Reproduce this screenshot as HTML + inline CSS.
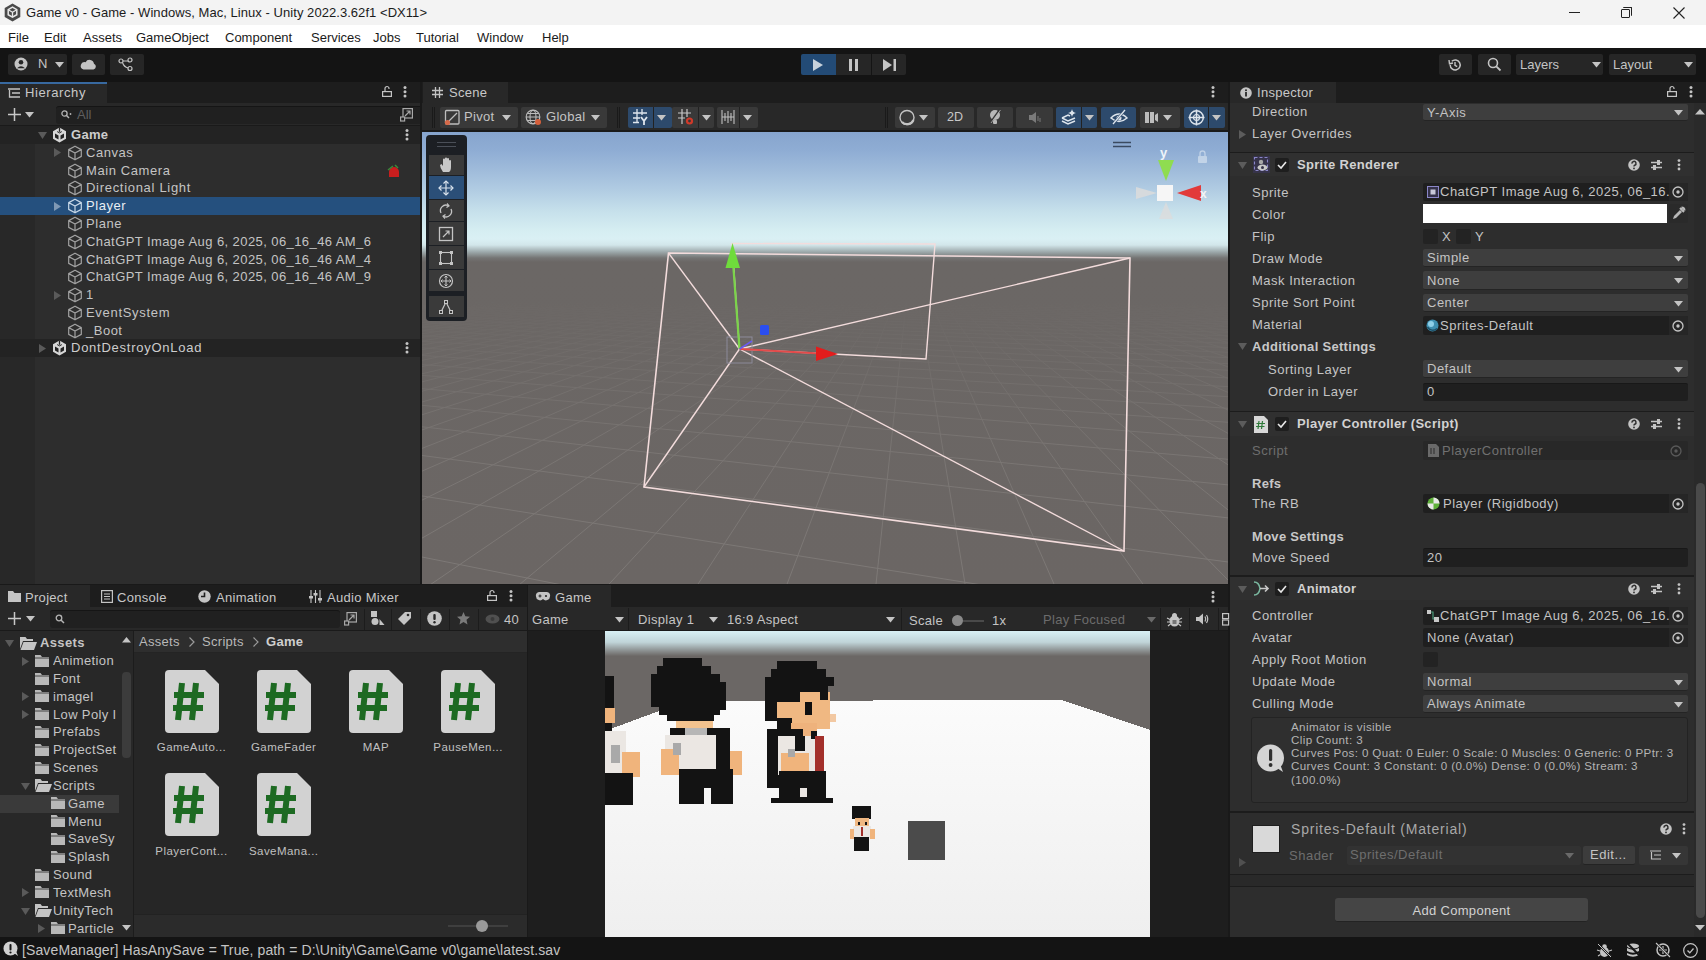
<!DOCTYPE html>
<html><head><meta charset="utf-8">
<style>
*{box-sizing:border-box;margin:0;padding:0}
html,body{width:1706px;height:960px;overflow:hidden;background:#191919;font-family:"Liberation Sans",sans-serif}
.a{position:absolute}
.t{position:absolute;white-space:nowrap;font-size:13px;line-height:18px;height:18px;color:#c4c4c4}
.b{font-weight:bold}
svg{position:absolute;overflow:visible}
</style></head><body>
<!-- TITLE BAR -->
<div class="a" style="left:0;top:0;width:1706px;height:25px;background:#f3f3f3"></div>
<svg style="left:3px;top:3px" width="19" height="19" viewBox="0 0 19 19"><path d="M9.5 0.5 L17.3 5 V14 L9.5 18.5 L1.7 14 V5Z" fill="#4a4a4a"/><path d="M9.5 4.2 L13.8 6.7 V11.7 L9.5 14.2 L5.2 11.7 V6.7Z" fill="none" stroke="#e8e8e8" stroke-width="1.5"/><path d="M9.5 9.2 V14 M9.5 9.2 L5.3 6.8 M9.5 9.2 L13.7 6.8" stroke="#e8e8e8" stroke-width="1.3"/></svg>
<div class="t" style="left:26px;top:4px;color:#1b1b1b;font-size:13px;letter-spacing:0.05px">Game v0 - Game - Windows, Mac, Linux - Unity 2022.3.62f1 &lt;DX11&gt;</div>
<div class="a" style="left:1569px;top:12px;width:11px;height:1px;background:#222"></div>
<div class="a" style="left:1621px;top:9px;width:9px;height:9px;border:1px solid #222;border-radius:1px"></div>
<div class="a" style="left:1623px;top:7px;width:9px;height:9px;border-top:1px solid #222;border-right:1px solid #222;border-radius:1px"></div>
<svg style="left:1673px;top:7px" width="12" height="12"><path d="M0.5 0.5 L11.5 11.5 M11.5 0.5 L0.5 11.5" stroke="#222" stroke-width="1.1"/></svg>
<!-- MENU BAR -->
<div class="a" style="left:0;top:25px;width:1706px;height:23px;background:#ffffff"></div>
<div class="t" style="left:8px;top:29px;color:#1a1a1a">File</div>
<div class="t" style="left:44px;top:29px;color:#1a1a1a">Edit</div>
<div class="t" style="left:83px;top:29px;color:#1a1a1a">Assets</div>
<div class="t" style="left:136px;top:29px;color:#1a1a1a">GameObject</div>
<div class="t" style="left:225px;top:29px;color:#1a1a1a">Component</div>
<div class="t" style="left:311px;top:29px;color:#1a1a1a">Services</div>
<div class="t" style="left:373px;top:29px;color:#1a1a1a">Jobs</div>
<div class="t" style="left:416px;top:29px;color:#1a1a1a">Tutorial</div>
<div class="t" style="left:477px;top:29px;color:#1a1a1a">Window</div>
<div class="t" style="left:542px;top:29px;color:#1a1a1a">Help</div>
<!-- TOOLBAR -->
<div class="a" style="left:0;top:48px;width:1706px;height:34px;background:#141414"></div>
<div class="a" style="left:8px;top:54px;width:59px;height:21px;background:#262626;border-radius:2px"></div>
<svg style="left:14px;top:57px" width="14" height="14" viewBox="0 0 14 14"><circle cx="7" cy="7" r="6.5" fill="#c4c4c4"/><circle cx="7" cy="5.3" r="2.3" fill="#262626"/><path d="M3 11.2 Q7 7.5 11 11.2" fill="#262626"/></svg>
<div class="t" style="left:38px;top:55px;color:#c4c4c4">N</div>
<svg style="left:55px;top:62px" width="9" height="6"><path d="M0 0 H9 L4.5 5.5Z" fill="#c4c4c4"/></svg>
<div class="a" style="left:72px;top:54px;width:33px;height:21px;background:#262626;border-radius:2px"></div>
<svg style="left:80px;top:58px" width="17" height="12" viewBox="0 0 17 12"><path d="M3.5 11.5 H13.5 A3 3 0 0 0 14 5.8 A4.5 4.5 0 0 0 5.6 4.2 A3.6 3.6 0 0 0 3.5 11.5Z" fill="#c4c4c4"/></svg>
<div class="a" style="left:110px;top:54px;width:34px;height:21px;background:#262626;border-radius:2px"></div>
<svg style="left:118px;top:57px" width="17" height="15" viewBox="0 0 17 15"><circle cx="3" cy="4" r="2" fill="none" stroke="#c4c4c4" stroke-width="1.2"/><circle cx="12" cy="3" r="2" fill="none" stroke="#c4c4c4" stroke-width="1.2"/><circle cx="12" cy="11.5" r="2" fill="none" stroke="#c4c4c4" stroke-width="1.2"/><path d="M5 4 H10 M4.5 5.5 Q6 10 10 11" fill="none" stroke="#c4c4c4" stroke-width="1.2"/></svg>
<!-- play controls -->
<div class="a" style="left:801px;top:54px;width:35px;height:21px;background:#234b76;border-radius:2px 0 0 2px"></div>
<svg style="left:813px;top:59px" width="11" height="13"><path d="M0 0 L10 6 L0 12Z" fill="#c8d2dc"/></svg>
<div class="a" style="left:836px;top:54px;width:35px;height:21px;background:#262626"></div>
<div class="a" style="left:849px;top:59px;width:3px;height:12px;background:#c4c4c4"></div>
<div class="a" style="left:855px;top:59px;width:3px;height:12px;background:#c4c4c4"></div>
<div class="a" style="left:872px;top:54px;width:34px;height:21px;background:#262626;border-radius:0 2px 2px 0"></div>
<svg style="left:883px;top:59px" width="14" height="13"><path d="M0 0 L9 6 L0 12Z" fill="#c4c4c4"/><rect x="10.5" y="0" width="2.5" height="12" fill="#c4c4c4"/></svg>
<!-- right toolbar -->
<div class="a" style="left:1439px;top:54px;width:33px;height:21px;background:#262626;border-radius:2px"></div>
<svg style="left:1448px;top:58px" width="14" height="14" viewBox="0 0 14 14"><path d="M2.2 7 A5 5 0 1 0 3.8 3.3" fill="none" stroke="#c4c4c4" stroke-width="1.5"/><path d="M1 2 L1.5 5.8 L5 5" fill="none" stroke="#c4c4c4" stroke-width="1.4"/><path d="M7 4 V7.3 L9.2 8.6" fill="none" stroke="#c4c4c4" stroke-width="1.4"/></svg>
<div class="a" style="left:1478px;top:54px;width:33px;height:21px;background:#262626;border-radius:2px"></div>
<svg style="left:1487px;top:57px" width="15" height="15" viewBox="0 0 15 15"><circle cx="6" cy="6" r="4.5" fill="none" stroke="#c4c4c4" stroke-width="1.6"/><path d="M9.3 9.3 L13.5 13.5" stroke="#c4c4c4" stroke-width="1.8"/></svg>
<div class="a" style="left:1516px;top:54px;width:87px;height:21px;background:#262626;border-radius:2px"></div>
<div class="t" style="left:1520px;top:56px;color:#c4c4c4">Layers</div>
<svg style="left:1592px;top:62px" width="9" height="6"><path d="M0 0 H9 L4.5 5.5Z" fill="#c4c4c4"/></svg>
<div class="a" style="left:1609px;top:54px;width:87px;height:21px;background:#262626;border-radius:2px"></div>
<div class="t" style="left:1613px;top:56px;color:#c4c4c4">Layout</div>
<svg style="left:1684px;top:62px" width="9" height="6"><path d="M0 0 H9 L4.5 5.5Z" fill="#c4c4c4"/></svg>
<div class="a" style="left:0;top:82px;width:420px;height:21px;background:#1d1d1d"></div>
<div class="a" style="left:0;top:82px;width:107px;height:21px;background:#282828"></div>
<div class="a" style="left:0;top:82px;width:107px;height:2px;background:#3869a0"></div>
<svg style="left:8px;top:88px" width="13" height="11" viewBox="0 0 13 11"><path d="M0 1 H12 M4 5 H12 M4 9 H12 M1.5 2 V9 H4" fill="none" stroke="#c4c4c4" stroke-width="1.3"/></svg>
<div class="t" style="left:25px;top:84px;color:#c8c8c8;letter-spacing:0.6px">Hierarchy</div>
<svg style="left:382px;top:86px" width="10" height="11" viewBox="0 0 10 11"><path d="M3 5 V2.5 A2 2 0 0 1 7 2.5 V3" fill="none" stroke="#c4c4c4" stroke-width="1.2"/><rect x="0.6" y="5.6" width="8.8" height="4.8" fill="none" stroke="#c4c4c4" stroke-width="1.2"/></svg>
<svg style="left:403px;top:86px" width="4" height="12" viewBox="0 0 4 12"><circle cx="2" cy="1.6" r="1.5" fill="#c4c4c4"/><circle cx="2" cy="5.8" r="1.5" fill="#c4c4c4"/><circle cx="2" cy="10" r="1.5" fill="#c4c4c4"/></svg>
<div class="a" style="left:0;top:103px;width:420px;height:23px;background:#282828"></div>
<div class="a" style="left:0;top:125px;width:420px;height:1px;background:#1a1a1a"></div>
<svg style="left:8px;top:108px" width="13" height="13"><path d="M6.5 0 V13 M0 6.5 H13" stroke="#c8c8c8" stroke-width="1.5"/></svg>
<svg style="left:25px;top:112px" width="9" height="6"><path d="M0 0 H9 L4.5 5.5Z" fill="#c4c4c4"/></svg>
<div class="a" style="left:56px;top:106px;width:364px;height:18px;background:#202020;border-radius:3px 0 0 3px;border-top:1px solid #151515"></div>
<svg style="left:61px;top:110px" width="11" height="10" viewBox="0 0 11 10"><circle cx="3.5" cy="3.5" r="2.6" fill="none" stroke="#b4b4b4" stroke-width="1.3"/><path d="M5.5 5.5 L8 8" stroke="#b4b4b4" stroke-width="1.4"/><circle cx="9.5" cy="4" r="0.9" fill="#b4b4b4"/></svg>
<div class="t" style="left:77px;top:106px;color:#5f5f5f">All</div>
<svg style="left:400px;top:108px" width="13" height="14" viewBox="0 0 13 14"><rect x="3" y="0.6" width="9.4" height="9.4" fill="none" stroke="#a8a8a8" stroke-width="1.2"/><rect x="0.6" y="9" width="4" height="4" fill="#202020" stroke="#a8a8a8" stroke-width="1.2"/><path d="M5 8 L10 3 M6.5 3 H10 V6.5" fill="none" stroke="#a8a8a8" stroke-width="1.2"/></svg>
<div class="a" style="left:0;top:126px;width:420px;height:458px;background:#2d2d2d"></div>
<div class="a" style="left:0;top:126px;width:35px;height:458px;background:#282828"></div>
<div class="a" style="left:420px;top:82px;width:2px;height:502px;background:#191919"></div>
<div class="a" style="left:0;top:126.30px;width:420px;height:17.76px;background:#232323"></div>
<svg style="left:38px;top:132.18px" width="9" height="7"><path d="M0 0 H9 L4.5 7Z" fill="#5a5a5a"/></svg>
<svg style="left:52px;top:127.18px" width="15" height="16" viewBox="0 0 15 16"><path d="M7.5 0.6 L14 4.3 V11.7 L7.5 15.4 L1 11.7 V4.3Z" fill="#d6d6d6"/><path d="M3 6.4 L6.5 8.4 V12.6 L3 10.6Z M12 6.4 L8.5 8.4 V12.6 L12 10.6Z" fill="#232323"/><path d="M7.5 0.3 V4.8" stroke="#232323" stroke-width="1.3"/><path d="M5.2 4.6 L7.5 5.9 L9.8 4.6" fill="none" stroke="#232323" stroke-width="1"/></svg>
<div class="t b" style="left:71px;top:126.18px;color:#cdcdcd;letter-spacing:0.3px">Game</div>
<svg style="left:405px;top:129.18px" width="4" height="12" viewBox="0 0 4 12"><circle cx="2" cy="1.6" r="1.5" fill="#c4c4c4"/><circle cx="2" cy="5.8" r="1.5" fill="#c4c4c4"/><circle cx="2" cy="10" r="1.5" fill="#c4c4c4"/></svg>
<svg style="left:54px;top:148.44px" width="7" height="9"><path d="M0 0 V9 L7 4.5Z" fill="#5a5a5a"/></svg>
<svg style="left:67px;top:144.94px" width="16" height="16" viewBox="0 0 16 16"><path d="M8 1.2 L14.3 4.6 V11.4 L8 14.8 L1.7 11.4 V4.6Z M1.7 4.6 L8 8 L14.3 4.6 M8 8 V14.8" fill="none" stroke="#a2a2a2" stroke-width="1.2" stroke-linejoin="round"/></svg>
<div class="t" style="left:86px;top:143.94px;color:#c4c4c4;letter-spacing:0.55px">Canvas</div>
<svg style="left:67px;top:162.7px" width="16" height="16" viewBox="0 0 16 16"><path d="M8 1.2 L14.3 4.6 V11.4 L8 14.8 L1.7 11.4 V4.6Z M1.7 4.6 L8 8 L14.3 4.6 M8 8 V14.8" fill="none" stroke="#a2a2a2" stroke-width="1.2" stroke-linejoin="round"/></svg>
<div class="t" style="left:86px;top:161.70px;color:#c4c4c4;letter-spacing:0.6px">Main Camera</div>
<svg style="left:67px;top:180.46px" width="16" height="16" viewBox="0 0 16 16"><path d="M8 1.2 L14.3 4.6 V11.4 L8 14.8 L1.7 11.4 V4.6Z M1.7 4.6 L8 8 L14.3 4.6 M8 8 V14.8" fill="none" stroke="#a2a2a2" stroke-width="1.2" stroke-linejoin="round"/></svg>
<div class="t" style="left:86px;top:179.46px;color:#c4c4c4;letter-spacing:0.7px">Directional Light</div>
<div class="a" style="left:0;top:197.34px;width:420px;height:17.76px;background:#25507e"></div>
<svg style="left:54px;top:201.72px" width="7" height="9"><path d="M0 0 V9 L7 4.5Z" fill="#7f98b4"/></svg>
<svg style="left:67px;top:198.22px" width="16" height="16" viewBox="0 0 16 16"><path d="M8 1.2 L14.3 4.6 V11.4 L8 14.8 L1.7 11.4 V4.6Z M1.7 4.6 L8 8 L14.3 4.6 M8 8 V14.8" fill="none" stroke="#c8d8e8" stroke-width="1.2" stroke-linejoin="round"/></svg>
<div class="t" style="left:86px;top:197.22px;color:#e8eef4;letter-spacing:0.55px">Player</div>
<svg style="left:67px;top:215.98px" width="16" height="16" viewBox="0 0 16 16"><path d="M8 1.2 L14.3 4.6 V11.4 L8 14.8 L1.7 11.4 V4.6Z M1.7 4.6 L8 8 L14.3 4.6 M8 8 V14.8" fill="none" stroke="#a2a2a2" stroke-width="1.2" stroke-linejoin="round"/></svg>
<div class="t" style="left:86px;top:214.98px;color:#c4c4c4;letter-spacing:0.55px">Plane</div>
<svg style="left:67px;top:233.74px" width="16" height="16" viewBox="0 0 16 16"><path d="M8 1.2 L14.3 4.6 V11.4 L8 14.8 L1.7 11.4 V4.6Z M1.7 4.6 L8 8 L14.3 4.6 M8 8 V14.8" fill="none" stroke="#a2a2a2" stroke-width="1.2" stroke-linejoin="round"/></svg>
<div class="t" style="left:86px;top:232.74px;color:#c4c4c4;letter-spacing:0.42px">ChatGPT Image Aug 6, 2025, 06_16_46 AM_6</div>
<svg style="left:67px;top:251.5px" width="16" height="16" viewBox="0 0 16 16"><path d="M8 1.2 L14.3 4.6 V11.4 L8 14.8 L1.7 11.4 V4.6Z M1.7 4.6 L8 8 L14.3 4.6 M8 8 V14.8" fill="none" stroke="#a2a2a2" stroke-width="1.2" stroke-linejoin="round"/></svg>
<div class="t" style="left:86px;top:250.50px;color:#c4c4c4;letter-spacing:0.42px">ChatGPT Image Aug 6, 2025, 06_16_46 AM_4</div>
<svg style="left:67px;top:269.26px" width="16" height="16" viewBox="0 0 16 16"><path d="M8 1.2 L14.3 4.6 V11.4 L8 14.8 L1.7 11.4 V4.6Z M1.7 4.6 L8 8 L14.3 4.6 M8 8 V14.8" fill="none" stroke="#a2a2a2" stroke-width="1.2" stroke-linejoin="round"/></svg>
<div class="t" style="left:86px;top:268.26px;color:#c4c4c4;letter-spacing:0.42px">ChatGPT Image Aug 6, 2025, 06_16_46 AM_9</div>
<svg style="left:54px;top:290.52px" width="7" height="9"><path d="M0 0 V9 L7 4.5Z" fill="#5a5a5a"/></svg>
<svg style="left:67px;top:287.02px" width="16" height="16" viewBox="0 0 16 16"><path d="M8 1.2 L14.3 4.6 V11.4 L8 14.8 L1.7 11.4 V4.6Z M1.7 4.6 L8 8 L14.3 4.6 M8 8 V14.8" fill="none" stroke="#a2a2a2" stroke-width="1.2" stroke-linejoin="round"/></svg>
<div class="t" style="left:86px;top:286.02px;color:#c4c4c4;letter-spacing:0.42px">1</div>
<svg style="left:67px;top:304.78px" width="16" height="16" viewBox="0 0 16 16"><path d="M8 1.2 L14.3 4.6 V11.4 L8 14.8 L1.7 11.4 V4.6Z M1.7 4.6 L8 8 L14.3 4.6 M8 8 V14.8" fill="none" stroke="#a2a2a2" stroke-width="1.2" stroke-linejoin="round"/></svg>
<div class="t" style="left:86px;top:303.78px;color:#c4c4c4;letter-spacing:0.7px">EventSystem</div>
<svg style="left:67px;top:322.54px" width="16" height="16" viewBox="0 0 16 16"><path d="M8 1.2 L14.3 4.6 V11.4 L8 14.8 L1.7 11.4 V4.6Z M1.7 4.6 L8 8 L14.3 4.6 M8 8 V14.8" fill="none" stroke="#a2a2a2" stroke-width="1.2" stroke-linejoin="round"/></svg>
<div class="t" style="left:86px;top:321.54px;color:#c4c4c4;letter-spacing:0.5px">_Boot</div>
<div class="a" style="left:0;top:339.42px;width:420px;height:17.76px;background:#232323"></div>
<svg style="left:39px;top:343.80px" width="7" height="9"><path d="M0 0 V9 L7 4.5Z" fill="#5a5a5a"/></svg>
<svg style="left:52px;top:340.3px" width="15" height="16" viewBox="0 0 15 16"><path d="M7.5 0.6 L14 4.3 V11.7 L7.5 15.4 L1 11.7 V4.3Z" fill="#d6d6d6"/><path d="M3 6.4 L6.5 8.4 V12.6 L3 10.6Z M12 6.4 L8.5 8.4 V12.6 L12 10.6Z" fill="#232323"/><path d="M7.5 0.3 V4.8" stroke="#232323" stroke-width="1.3"/><path d="M5.2 4.6 L7.5 5.9 L9.8 4.6" fill="none" stroke="#232323" stroke-width="1"/></svg>
<div class="t" style="left:71px;top:339.30px;color:#cdcdcd;letter-spacing:0.75px">DontDestroyOnLoad</div>
<svg style="left:405px;top:342.3px" width="4" height="12" viewBox="0 0 4 12"><circle cx="2" cy="1.6" r="1.5" fill="#c4c4c4"/><circle cx="2" cy="5.8" r="1.5" fill="#c4c4c4"/><circle cx="2" cy="10" r="1.5" fill="#c4c4c4"/></svg>
<svg style="left:386px;top:163.70px" width="16" height="14" viewBox="0 0 16 14"><path d="M3 8 A5 5 0 0 1 13 8 V13 H3Z" fill="#c81e1e"/><path d="M2 6 L7 2 M9 1 L12 4" stroke="#3a8a3a" stroke-width="1.5"/></svg><div class="a" style="left:422px;top:82px;width:806px;height:21px;background:#1d1d1d"></div>
<div class="a" style="left:423px;top:82px;width:85px;height:21px;background:#282828"></div>
<svg style="left:432px;top:87px" width="11" height="11" viewBox="0 0 11 11"><path d="M3.5 0 V11 M7.5 0 V11 M0 3.5 H11 M0 7.5 H11" stroke="#c4c4c4" stroke-width="1.3"/></svg>
<div class="t" style="left:449px;top:84px;color:#c8c8c8;letter-spacing:0.3px">Scene</div>
<svg style="left:1211px;top:86px" width="4" height="12" viewBox="0 0 4 12"><circle cx="2" cy="1.6" r="1.5" fill="#c4c4c4"/><circle cx="2" cy="5.8" r="1.5" fill="#c4c4c4"/><circle cx="2" cy="10" r="1.5" fill="#c4c4c4"/></svg>
<div class="a" style="left:422px;top:103px;width:806px;height:28px;background:#282828"></div>

<div class="a" style="left:432px;top:107px;width:1px;height:21px;background:#1a1a1a"></div>
<div class="a" style="left:434px;top:107px;width:1px;height:21px;background:#1a1a1a"></div>
<div class="a" style="left:617px;top:107px;width:1px;height:21px;background:#1a1a1a"></div>
<div class="a" style="left:619px;top:107px;width:1px;height:21px;background:#1a1a1a"></div>
<div class="a" style="left:885px;top:107px;width:1px;height:21px;background:#1a1a1a"></div>
<div class="a" style="left:887px;top:107px;width:1px;height:21px;background:#1a1a1a"></div>
<div class="a" style="left:440px;top:107px;width:78px;height:21px;background:#393939;border-radius:2px"></div>
<div class="a" style="left:521px;top:107px;width:86px;height:21px;background:#393939;border-radius:2px"></div>
<div class="a" style="left:628px;top:107px;width:44px;height:21px;background:#2d4a6c;border-radius:2px"></div>
<div class="a" style="left:672px;top:107px;width:42px;height:21px;background:#393939;border-radius:2px"></div>
<div class="a" style="left:717px;top:107px;width:41px;height:21px;background:#393939;border-radius:2px"></div>
<div class="a" style="left:895px;top:107px;width:40px;height:21px;background:#393939;border-radius:2px"></div>
<div class="a" style="left:938px;top:107px;width:36px;height:21px;background:#393939;border-radius:2px"></div>
<div class="a" style="left:977px;top:107px;width:36px;height:21px;background:#393939;border-radius:2px"></div>
<div class="a" style="left:1016px;top:107px;width:37px;height:21px;background:#393939;border-radius:2px"></div>
<div class="a" style="left:1056px;top:107px;width:41px;height:21px;background:#2d4a6c;border-radius:2px"></div>
<div class="a" style="left:1101px;top:107px;width:35px;height:21px;background:#2d4a6c;border-radius:2px"></div>
<div class="a" style="left:1140px;top:107px;width:40px;height:21px;background:#393939;border-radius:2px"></div>
<div class="a" style="left:1184px;top:107px;width:41px;height:21px;background:#2d4a6c;border-radius:2px"></div>
<div class="a" style="left:653px;top:107px;width:1px;height:21px;background:#222"></div>
<div class="a" style="left:698px;top:107px;width:1px;height:21px;background:#222"></div>
<div class="a" style="left:739px;top:107px;width:1px;height:21px;background:#222"></div>
<div class="a" style="left:1081px;top:107px;width:1px;height:21px;background:#222"></div>
<div class="a" style="left:1208px;top:107px;width:1px;height:21px;background:#222"></div>
<svg style="left:444px;top:109px" width="17" height="17" viewBox="0 0 17 17"><rect x="1.5" y="1.5" width="13.5" height="13.5" rx="1" fill="none" stroke="#bdbdbd" stroke-width="1.3"/><path d="M4 13 L13 4" stroke="#bdbdbd" stroke-width="1.3"/><circle cx="3.5" cy="13.5" r="2.6" fill="#d66a4a"/></svg>
<div class="t" style="left:464px;top:108px;color:#c4c4c4;letter-spacing:0.3px">Pivot</div>
<svg style="left:502px;top:115px" width="9" height="6"><path d="M0 0 H9 L4.5 5.5Z" fill="#c4c4c4"/></svg>
<svg style="left:525px;top:109px" width="18" height="18" viewBox="0 0 18 18"><circle cx="8" cy="8" r="6.8" fill="none" stroke="#bdbdbd" stroke-width="1.2"/><ellipse cx="8" cy="8" rx="3" ry="6.8" fill="none" stroke="#bdbdbd" stroke-width="1.1"/><path d="M1.2 8 H14.8 M2.5 4.5 H13.5 M2.5 11.5 H13.5" stroke="#bdbdbd" stroke-width="1"/><circle cx="13" cy="13" r="3" fill="#d6603c"/></svg>
<div class="t" style="left:546px;top:108px;color:#c4c4c4;letter-spacing:0.3px">Global</div>
<svg style="left:591px;top:115px" width="9" height="6"><path d="M0 0 H9 L4.5 5.5Z" fill="#c4c4c4"/></svg>
<svg style="left:633px;top:109px" width="16" height="17" viewBox="0 0 16 17"><path d="M4 0 V14 M9 0 V6 M0 4 H14 M0 9 H7 M0 13.5 H6" stroke="#dfe6ee" stroke-width="1.3"/><path d="M8 8 L11 12 L14 8 M11 12 V16" fill="none" stroke="#dfe6ee" stroke-width="1.8"/></svg>
<svg style="left:657px;top:115px" width="9" height="6"><path d="M0 0 H9 L4.5 5.5Z" fill="#c4c4c4"/></svg>
<svg style="left:678px;top:109px" width="17" height="17" viewBox="0 0 17 17"><path d="M4 0 V15 M9 0 V8 M0 4 H13 M0 9 H7" stroke="#c8c8c8" stroke-width="1.2"/><circle cx="11.5" cy="12" r="3.6" fill="#d03a2a"/><circle cx="11.5" cy="12" r="1.4" fill="#363636"/></svg>
<svg style="left:702px;top:115px" width="9" height="6"><path d="M0 0 H9 L4.5 5.5Z" fill="#c4c4c4"/></svg>
<svg style="left:721px;top:109px" width="16" height="16" viewBox="0 0 16 16"><path d="M1 1 V15 M4 4 V12 M7 2 V14 M10 4 V12 M13 1 V15 M1 8 H13" stroke="#c0c0c0" stroke-width="1.1"/></svg>
<svg style="left:743px;top:115px" width="9" height="6"><path d="M0 0 H9 L4.5 5.5Z" fill="#c4c4c4"/></svg>
<svg style="left:899px;top:109px" width="17" height="17" viewBox="0 0 17 17"><circle cx="8" cy="8.5" r="7" fill="none" stroke="#c4c4c4" stroke-width="1.4"/><path d="M3 13 A7 7 0 0 0 14.5 11" fill="none" stroke="#c4c4c4" stroke-width="2.2"/></svg>
<svg style="left:919px;top:115px" width="9" height="6"><path d="M0 0 H9 L4.5 5.5Z" fill="#c4c4c4"/></svg>
<div class="t" style="left:947px;top:108px;color:#c8c8c8;font-size:12.5px">2D</div>
<svg style="left:988px;top:109px" width="14" height="16" viewBox="0 0 14 16"><circle cx="7" cy="6" r="5" fill="#b8b8b8"/><rect x="5" y="11" width="4" height="4" rx="1" fill="#b8b8b8"/><path d="M12 0 L2 14" stroke="#363636" stroke-width="1.6"/><path d="M12.5 1 L3 14" stroke="#b8b8b8" stroke-width="0.8"/></svg>
<svg style="left:1028px;top:111px" width="13" height="13" viewBox="0 0 13 13"><rect x="1" y="4" width="3" height="5" fill="#7a7a7a"/><path d="M4 4 L8 1 V12 L4 9Z" fill="#7a7a7a"/><path d="M10 5 V10 M12 7 V11" stroke="#7a7a7a" stroke-width="1"/></svg>
<svg style="left:1061px;top:109px" width="16" height="16" viewBox="0 0 16 16"><path d="M1 9 L7 12 L14 9 M1 12 L7 15 L14 12" fill="none" stroke="#dde4ec" stroke-width="1.5"/><path d="M1 9 L7 6 L9 7" fill="none" stroke="#dde4ec" stroke-width="1.5"/><path d="M11 0 Q11.5 3.5 15 4 Q11.5 4.5 11 8 Q10.5 4.5 7 4 Q10.5 3.5 11 0Z" fill="#dde4ec"/></svg>
<svg style="left:1085px;top:115px" width="9" height="6"><path d="M0 0 H9 L4.5 5.5Z" fill="#c4c4c4"/></svg>
<svg style="left:1110px;top:109px" width="18" height="16" viewBox="0 0 18 16"><path d="M1 9 Q9 1 17 9 Q9 16 1 9Z" fill="none" stroke="#dde4ec" stroke-width="1.5"/><circle cx="9" cy="9" r="2.5" fill="#dde4ec"/><path d="M15 1 L3 15" stroke="#2d4a6c" stroke-width="2.5"/><path d="M15 1 L3 15" stroke="#dde4ec" stroke-width="1.3"/></svg>
<svg style="left:1145px;top:111px" width="14" height="13" viewBox="0 0 14 13"><rect x="0" y="1" width="9" height="11" fill="#bcbcbc"/><path d="M4.5 1 V12" stroke="#363636" stroke-width="1"/><path d="M10 4 L13 2 V11 L10 9Z" fill="#bcbcbc"/></svg>
<svg style="left:1163px;top:115px" width="9" height="6"><path d="M0 0 H9 L4.5 5.5Z" fill="#c4c4c4"/></svg>
<svg style="left:1188px;top:109px" width="17" height="17" viewBox="0 0 17 17"><circle cx="8.5" cy="8.5" r="6.8" fill="none" stroke="#dde4ec" stroke-width="1.5"/><path d="M8.5 0.5 V16.5 M0.5 8.5 H16.5" stroke="#dde4ec" stroke-width="1.5"/><circle cx="8.5" cy="8.5" r="3" fill="none" stroke="#dde4ec" stroke-width="1.2"/></svg>
<svg style="left:1212px;top:115px" width="9" height="6"><path d="M0 0 H9 L4.5 5.5Z" fill="#c4c4c4"/></svg>
<div class="a" style="left:422px;top:131px;width:806px;height:453px;background:linear-gradient(to bottom,#86a4cd 0px,#8fadd4 20px,#a0bcdb 40px,#b2cde3 60px,#c6e0eb 80px,#d6eef2 100px,#daf0f4 108px,#d2e6ea 114px,#9ca8aa 121px,#747473 127px,#6b6765 131px,#6b6664 453px)"></div>
<svg style="left:422px;top:131px" width="806" height="453" viewBox="422 131 806 453"><defs><linearGradient id="gfade" gradientUnits="userSpaceOnUse" x1="0" y1="258" x2="0" y2="584"><stop offset="0" stop-color="#fff" stop-opacity="0"/><stop offset="0.12" stop-color="#fff" stop-opacity="0.0"/><stop offset="0.3" stop-color="#fff" stop-opacity="0.3"/><stop offset="0.6" stop-color="#fff" stop-opacity="0.8"/><stop offset="1" stop-color="#fff" stop-opacity="1"/></linearGradient><mask id="gmask"><rect x="422" y="131" width="806" height="453" fill="url(#gfade)"/></mask></defs><g mask="url(#gmask)" stroke="#94908d" stroke-width="1" opacity="0.45"><line x1="-106568.5" y1="5170.7" x2="563.9" y2="272.9"/><line x1="-105231.6" y1="5170.7" x2="567.4" y2="272.9"/><line x1="-103894.7" y1="5170.7" x2="571.0" y2="272.9"/><line x1="-102557.8" y1="5170.7" x2="574.6" y2="273.0"/><line x1="-101220.9" y1="5170.7" x2="578.2" y2="273.0"/><line x1="-99884.0" y1="5170.7" x2="581.9" y2="273.0"/><line x1="-98547.1" y1="5170.7" x2="585.5" y2="273.1"/><line x1="-97210.2" y1="5170.7" x2="589.2" y2="273.1"/><line x1="-95873.2" y1="5170.7" x2="592.9" y2="273.2"/><line x1="-94536.3" y1="5170.7" x2="596.6" y2="273.2"/><line x1="-93199.4" y1="5170.7" x2="600.3" y2="273.2"/><line x1="-91862.5" y1="5170.7" x2="604.0" y2="273.3"/><line x1="-90525.6" y1="5170.7" x2="607.8" y2="273.3"/><line x1="-89188.7" y1="5170.7" x2="611.6" y2="273.3"/><line x1="-87851.8" y1="5170.7" x2="615.3" y2="273.4"/><line x1="-86514.8" y1="5170.7" x2="619.1" y2="273.4"/><line x1="-85177.9" y1="5170.7" x2="623.0" y2="273.4"/><line x1="-83841.0" y1="5170.7" x2="626.8" y2="273.5"/><line x1="-82504.1" y1="5170.7" x2="630.6" y2="273.5"/><line x1="-81167.2" y1="5170.7" x2="634.5" y2="273.6"/><line x1="-79830.3" y1="5170.7" x2="638.4" y2="273.6"/><line x1="-78493.4" y1="5170.7" x2="642.3" y2="273.6"/><line x1="-77156.5" y1="5170.7" x2="646.2" y2="273.7"/><line x1="-75819.5" y1="5170.7" x2="650.2" y2="273.7"/><line x1="-74482.6" y1="5170.7" x2="654.1" y2="273.7"/><line x1="-73145.7" y1="5170.7" x2="658.1" y2="273.8"/><line x1="-71808.8" y1="5170.7" x2="662.1" y2="273.8"/><line x1="-70471.9" y1="5170.7" x2="666.1" y2="273.9"/><line x1="-69135.0" y1="5170.7" x2="670.2" y2="273.9"/><line x1="-67798.1" y1="5170.7" x2="674.2" y2="273.9"/><line x1="-66461.1" y1="5170.7" x2="678.3" y2="274.0"/><line x1="-65124.2" y1="5170.7" x2="682.4" y2="274.0"/><line x1="-63787.3" y1="5170.7" x2="686.5" y2="274.1"/><line x1="-62450.4" y1="5170.7" x2="690.6" y2="274.1"/><line x1="-61113.5" y1="5170.7" x2="694.7" y2="274.1"/><line x1="-59776.6" y1="5170.7" x2="698.9" y2="274.2"/><line x1="-58439.7" y1="5170.7" x2="703.1" y2="274.2"/><line x1="-57102.8" y1="5170.7" x2="707.3" y2="274.3"/><line x1="-55765.8" y1="5170.7" x2="711.5" y2="274.3"/><line x1="-54428.9" y1="5170.7" x2="715.8" y2="274.3"/><line x1="-53092.0" y1="5170.7" x2="720.0" y2="274.4"/><line x1="-51755.1" y1="5170.7" x2="724.3" y2="274.4"/><line x1="-50418.2" y1="5170.7" x2="728.6" y2="274.5"/><line x1="-49081.3" y1="5170.7" x2="733.0" y2="274.5"/><line x1="-47744.4" y1="5170.7" x2="737.3" y2="274.5"/><line x1="-46407.5" y1="5170.7" x2="741.7" y2="274.6"/><line x1="-45070.5" y1="5170.7" x2="746.1" y2="274.6"/><line x1="-43733.6" y1="5170.7" x2="750.5" y2="274.7"/><line x1="-42396.7" y1="5170.7" x2="754.9" y2="274.7"/><line x1="-41059.8" y1="5170.7" x2="759.4" y2="274.8"/><line x1="-39722.9" y1="5170.7" x2="763.8" y2="274.8"/><line x1="-38386.0" y1="5170.7" x2="768.3" y2="274.8"/><line x1="-37049.1" y1="5170.7" x2="772.9" y2="274.9"/><line x1="-35712.1" y1="5170.7" x2="777.4" y2="274.9"/><line x1="-34375.2" y1="5170.7" x2="782.0" y2="275.0"/><line x1="-33038.3" y1="5170.7" x2="786.5" y2="275.0"/><line x1="-31701.4" y1="5170.7" x2="791.2" y2="275.1"/><line x1="-30364.5" y1="5170.7" x2="795.8" y2="275.1"/><line x1="-29027.6" y1="5170.7" x2="800.4" y2="275.2"/><line x1="-27690.7" y1="5170.7" x2="805.1" y2="275.2"/><line x1="-26353.8" y1="5170.7" x2="809.8" y2="275.2"/><line x1="-25016.8" y1="5170.7" x2="814.5" y2="275.3"/><line x1="-23679.9" y1="5170.7" x2="819.3" y2="275.3"/><line x1="-22343.0" y1="5170.7" x2="824.1" y2="275.4"/><line x1="-33105.8" y1="1812.2" x2="-102268.0" y2="5170.7"/><line x1="-21006.1" y1="5170.7" x2="828.9" y2="275.4"/><line x1="-16100.3" y1="1034.7" x2="-95978.4" y2="5170.7"/><line x1="-19669.2" y1="5170.7" x2="833.7" y2="275.5"/><line x1="-10430.5" y1="775.5" x2="-89688.7" y2="5170.7"/><line x1="-18332.3" y1="5170.7" x2="838.5" y2="275.5"/><line x1="-7595.4" y1="645.9" x2="-83399.0" y2="5170.7"/><line x1="-16995.4" y1="5170.7" x2="843.4" y2="275.6"/><line x1="-5894.2" y1="568.1" x2="-77109.3" y2="5170.7"/><line x1="-15658.5" y1="5170.7" x2="848.3" y2="275.6"/><line x1="-4760.0" y1="516.3" x2="-70819.6" y2="5170.7"/><line x1="-14321.5" y1="5170.7" x2="853.2" y2="275.7"/><line x1="-3949.9" y1="479.2" x2="-64529.9" y2="5170.7"/><line x1="-12984.6" y1="5170.7" x2="858.2" y2="275.7"/><line x1="-3342.3" y1="451.5" x2="-58240.3" y2="5170.7"/><line x1="-11647.7" y1="5170.7" x2="863.1" y2="275.8"/><line x1="-2869.7" y1="429.9" x2="-51950.6" y2="5170.7"/><line x1="-10310.8" y1="5170.7" x2="868.1" y2="275.8"/><line x1="-2491.7" y1="412.6" x2="-45660.9" y2="5170.7"/><line x1="-8973.9" y1="5170.7" x2="873.1" y2="275.9"/><line x1="-2182.3" y1="398.4" x2="-39371.2" y2="5170.7"/><line x1="-7637.0" y1="5170.7" x2="878.2" y2="275.9"/><line x1="-1924.6" y1="386.6" x2="-33081.5" y2="5170.7"/><line x1="-6300.1" y1="5170.7" x2="883.3" y2="276.0"/><line x1="-1706.4" y1="376.7" x2="-26791.9" y2="5170.7"/><line x1="-4963.1" y1="5170.7" x2="888.4" y2="276.0"/><line x1="-1519.5" y1="368.1" x2="-20502.2" y2="5170.7"/><line x1="-3626.2" y1="5170.7" x2="893.5" y2="276.1"/><line x1="-1357.4" y1="360.7" x2="-14212.5" y2="5170.7"/><line x1="-2289.3" y1="5170.7" x2="898.6" y2="276.1"/><line x1="-1215.7" y1="354.2" x2="-7922.8" y2="5170.7"/><line x1="-952.4" y1="5170.7" x2="903.8" y2="276.2"/><line x1="-1090.6" y1="348.5" x2="-1633.1" y2="5170.7"/><line x1="384.5" y1="5170.7" x2="909.0" y2="276.2"/><line x1="-979.4" y1="343.4" x2="4656.6" y2="5170.7"/><line x1="1721.4" y1="5170.7" x2="914.3" y2="276.3"/><line x1="-879.9" y1="338.9" x2="10946.2" y2="5170.7"/><line x1="3058.3" y1="5170.7" x2="919.5" y2="276.3"/><line x1="-790.3" y1="334.8" x2="17235.9" y2="5170.7"/><line x1="4395.2" y1="5170.7" x2="924.8" y2="276.4"/><line x1="-709.3" y1="331.1" x2="23525.6" y2="5170.7"/><line x1="5732.2" y1="5170.7" x2="930.1" y2="276.4"/><line x1="-635.7" y1="327.7" x2="29815.3" y2="5170.7"/><line x1="7069.1" y1="5170.7" x2="935.5" y2="276.5"/><line x1="-568.4" y1="324.6" x2="36105.0" y2="5170.7"/><line x1="8406.0" y1="5170.7" x2="940.8" y2="276.5"/><line x1="-506.8" y1="321.8" x2="42394.6" y2="5170.7"/><line x1="9742.9" y1="5170.7" x2="946.2" y2="276.6"/><line x1="-450.0" y1="319.2" x2="48684.3" y2="5170.7"/><line x1="11079.8" y1="5170.7" x2="951.7" y2="276.6"/><line x1="-397.7" y1="316.8" x2="54974.0" y2="5170.7"/><line x1="12416.7" y1="5170.7" x2="957.1" y2="276.7"/><line x1="-349.2" y1="314.6" x2="61263.7" y2="5170.7"/><line x1="13753.6" y1="5170.7" x2="962.6" y2="276.7"/><line x1="-304.2" y1="312.6" x2="67553.4" y2="5170.7"/><line x1="15090.6" y1="5170.7" x2="968.2" y2="276.8"/><line x1="-262.3" y1="310.6" x2="73843.1" y2="5170.7"/><line x1="16427.5" y1="5170.7" x2="973.7" y2="276.8"/><line x1="-223.2" y1="308.9" x2="80132.7" y2="5170.7"/><line x1="17764.4" y1="5170.7" x2="979.3" y2="276.9"/><line x1="-186.6" y1="307.2" x2="86422.4" y2="5170.7"/><line x1="19101.3" y1="5170.7" x2="984.9" y2="276.9"/><line x1="-152.3" y1="305.6" x2="92712.1" y2="5170.7"/><line x1="20438.2" y1="5170.7" x2="990.5" y2="277.0"/><line x1="-120.1" y1="304.1" x2="99001.8" y2="5170.7"/><line x1="21775.1" y1="5170.7" x2="996.2" y2="277.0"/><line x1="-89.8" y1="302.8" x2="105291.5" y2="5170.7"/><line x1="23112.0" y1="5170.7" x2="1001.9" y2="277.1"/><line x1="-61.2" y1="301.4" x2="34902.2" y2="1826.4"/><line x1="24448.9" y1="5170.7" x2="1007.6" y2="277.2"/><line x1="-34.2" y1="300.2" x2="17832.4" y2="1038.3"/><line x1="25785.9" y1="5170.7" x2="1013.4" y2="277.2"/><line x1="-8.6" y1="299.0" x2="12175.5" y2="777.1"/><line x1="27122.8" y1="5170.7" x2="1019.2" y2="277.3"/><line x1="15.6" y1="297.9" x2="9353.3" y2="646.8"/><line x1="28459.7" y1="5170.7" x2="1025.0" y2="277.3"/><line x1="38.6" y1="296.9" x2="7661.9" y2="568.7"/><line x1="29796.6" y1="5170.7" x2="1030.9" y2="277.4"/><line x1="60.4" y1="295.9" x2="6535.1" y2="516.7"/><line x1="31133.5" y1="5170.7" x2="1036.8" y2="277.4"/><line x1="81.1" y1="294.9" x2="5730.7" y2="479.5"/><line x1="32470.4" y1="5170.7" x2="1042.7" y2="277.5"/><line x1="100.9" y1="294.0" x2="5127.6" y2="451.7"/><line x1="33807.3" y1="5170.7" x2="1048.7" y2="277.6"/><line x1="119.7" y1="293.2" x2="4658.6" y2="430.0"/><line x1="35144.2" y1="5170.7" x2="1054.7" y2="277.6"/><line x1="137.7" y1="292.4" x2="4283.5" y2="412.7"/><line x1="36481.2" y1="5170.7" x2="1060.7" y2="277.7"/><line x1="154.9" y1="291.6" x2="3976.7" y2="398.5"/><line x1="37818.1" y1="5170.7" x2="1066.8" y2="277.7"/><line x1="171.3" y1="290.8" x2="3721.1" y2="386.7"/><line x1="39155.0" y1="5170.7" x2="1072.9" y2="277.8"/><line x1="187.1" y1="290.1" x2="3504.8" y2="376.8"/><line x1="40491.9" y1="5170.7" x2="1079.0" y2="277.8"/><line x1="202.2" y1="289.4" x2="3319.4" y2="368.2"/><line x1="41828.8" y1="5170.7" x2="1085.2" y2="277.9"/><line x1="216.6" y1="288.7" x2="3158.7" y2="360.8"/><line x1="43165.7" y1="5170.7" x2="1091.4" y2="278.0"/><line x1="230.5" y1="288.1" x2="3018.2" y2="354.3"/><line x1="44502.6" y1="5170.7" x2="1097.6" y2="278.0"/><line x1="243.9" y1="287.5" x2="2894.2" y2="348.6"/><line x1="45839.6" y1="5170.7" x2="1103.9" y2="278.1"/><line x1="256.7" y1="286.9" x2="2783.9" y2="343.5"/><line x1="47176.5" y1="5170.7" x2="1110.2" y2="278.2"/><line x1="269.0" y1="286.4" x2="2685.3" y2="338.9"/><line x1="48513.4" y1="5170.7" x2="1116.6" y2="278.2"/><line x1="280.9" y1="285.8" x2="2596.6" y2="334.8"/><line x1="49850.3" y1="5170.7" x2="1123.0" y2="278.3"/><line x1="292.4" y1="285.3" x2="2516.3" y2="331.1"/><line x1="51187.2" y1="5170.7" x2="1129.4" y2="278.3"/><line x1="303.4" y1="284.8" x2="2443.3" y2="327.7"/><line x1="52524.1" y1="5170.7" x2="1135.8" y2="278.4"/><line x1="314.1" y1="284.3" x2="2376.6" y2="324.7"/><line x1="53861.0" y1="5170.7" x2="1142.3" y2="278.5"/><line x1="324.4" y1="283.8" x2="2315.6" y2="321.8"/><line x1="55197.9" y1="5170.7" x2="1148.9" y2="278.5"/><line x1="334.3" y1="283.4" x2="2259.4" y2="319.3"/><line x1="56534.9" y1="5170.7" x2="1155.4" y2="278.6"/><line x1="343.9" y1="282.9" x2="2207.5" y2="316.9"/><line x1="57871.8" y1="5170.7" x2="1162.1" y2="278.7"/><line x1="353.2" y1="282.5" x2="2159.5" y2="314.6"/><line x1="59208.7" y1="5170.7" x2="1168.7" y2="278.7"/><line x1="362.2" y1="282.1" x2="2114.9" y2="312.6"/><line x1="60545.6" y1="5170.7" x2="1175.4" y2="278.8"/><line x1="370.9" y1="281.7" x2="2073.3" y2="310.7"/><line x1="61882.5" y1="5170.7" x2="1182.1" y2="278.8"/><line x1="379.4" y1="281.3" x2="2034.6" y2="308.9"/><line x1="63219.4" y1="5170.7" x2="1188.9" y2="278.9"/><line x1="387.6" y1="280.9" x2="1998.3" y2="307.2"/><line x1="64556.3" y1="5170.7" x2="1195.7" y2="279.0"/><line x1="395.5" y1="280.6" x2="1964.3" y2="305.6"/><line x1="65893.2" y1="5170.7" x2="1202.6" y2="279.0"/><line x1="403.2" y1="280.2" x2="1932.4" y2="304.2"/><line x1="67230.2" y1="5170.7" x2="1209.5" y2="279.1"/><line x1="410.7" y1="279.9" x2="1902.4" y2="302.8"/><line x1="68567.1" y1="5170.7" x2="1216.4" y2="279.2"/><line x1="417.9" y1="279.5" x2="1874.0" y2="301.5"/><line x1="69904.0" y1="5170.7" x2="1223.4" y2="279.2"/><line x1="425.0" y1="279.2" x2="1847.3" y2="300.2"/><line x1="71240.9" y1="5170.7" x2="1230.4" y2="279.3"/><line x1="431.8" y1="278.9" x2="1822.0" y2="299.1"/><line x1="72577.8" y1="5170.7" x2="1237.5" y2="279.4"/><line x1="438.5" y1="278.6" x2="1798.0" y2="297.9"/><line x1="73914.7" y1="5170.7" x2="1244.6" y2="279.4"/><line x1="444.9" y1="278.3" x2="1775.3" y2="296.9"/><line x1="75251.6" y1="5170.7" x2="1251.7" y2="279.5"/><line x1="451.2" y1="278.0" x2="1753.6" y2="295.9"/><line x1="76588.6" y1="5170.7" x2="1258.9" y2="279.6"/><line x1="457.4" y1="277.7" x2="1733.1" y2="295.0"/><line x1="77925.5" y1="5170.7" x2="1266.2" y2="279.7"/><line x1="463.3" y1="277.5" x2="1713.5" y2="294.0"/><line x1="79262.4" y1="5170.7" x2="1273.5" y2="279.7"/><line x1="469.2" y1="277.2" x2="1694.9" y2="293.2"/><line x1="80599.3" y1="5170.7" x2="1280.8" y2="279.8"/><line x1="474.8" y1="276.9" x2="1677.0" y2="292.4"/><line x1="81936.2" y1="5170.7" x2="1288.2" y2="279.9"/><line x1="480.3" y1="276.7" x2="1660.0" y2="291.6"/><line x1="83273.1" y1="5170.7" x2="1295.6" y2="279.9"/><line x1="485.7" y1="276.4" x2="1643.7" y2="290.8"/><line x1="84610.0" y1="5170.7" x2="1303.1" y2="280.0"/><line x1="491.0" y1="276.2" x2="1628.1" y2="290.1"/><line x1="85946.9" y1="5170.7" x2="1310.6" y2="280.1"/><line x1="496.1" y1="276.0" x2="1613.2" y2="289.4"/><line x1="87283.9" y1="5170.7" x2="1318.1" y2="280.2"/><line x1="501.1" y1="275.7" x2="1598.9" y2="288.8"/><line x1="88620.8" y1="5170.7" x2="1325.8" y2="280.2"/><line x1="506.0" y1="275.5" x2="1585.1" y2="288.1"/><line x1="89957.7" y1="5170.7" x2="1333.4" y2="280.3"/><line x1="510.7" y1="275.3" x2="1571.9" y2="287.5"/><line x1="91294.6" y1="5170.7" x2="1341.1" y2="280.4"/><line x1="515.4" y1="275.1" x2="1559.2" y2="286.9"/><line x1="92631.5" y1="5170.7" x2="1348.9" y2="280.5"/><line x1="519.9" y1="274.9" x2="1546.9" y2="286.4"/><line x1="93968.4" y1="5170.7" x2="1356.7" y2="280.5"/><line x1="524.4" y1="274.7" x2="1535.2" y2="285.8"/><line x1="95305.3" y1="5170.7" x2="1364.6" y2="280.6"/><line x1="528.7" y1="274.5" x2="1523.8" y2="285.3"/><line x1="96642.3" y1="5170.7" x2="1372.5" y2="280.7"/><line x1="533.0" y1="274.3" x2="1512.9" y2="284.8"/><line x1="97979.2" y1="5170.7" x2="1380.4" y2="280.8"/><line x1="537.1" y1="274.1" x2="1502.3" y2="284.3"/><line x1="99316.1" y1="5170.7" x2="1388.4" y2="280.8"/><line x1="541.2" y1="273.9" x2="1492.1" y2="283.8"/><line x1="100653.0" y1="5170.7" x2="1396.5" y2="280.9"/><line x1="545.2" y1="273.7" x2="1482.3" y2="283.4"/><line x1="101989.9" y1="5170.7" x2="1404.6" y2="281.0"/><line x1="549.1" y1="273.6" x2="1472.7" y2="282.9"/><line x1="103326.8" y1="5170.7" x2="1412.8" y2="281.1"/><line x1="552.9" y1="273.4" x2="1463.5" y2="282.5"/><line x1="104663.7" y1="5170.7" x2="1421.0" y2="281.2"/><line x1="556.6" y1="273.2" x2="1454.6" y2="282.1"/><line x1="106000.6" y1="5170.7" x2="1429.3" y2="281.2"/><line x1="560.3" y1="273.0" x2="1446.0" y2="281.7"/><line x1="107337.6" y1="5170.7" x2="1437.6" y2="281.3"/><line x1="563.9" y1="272.9" x2="1437.6" y2="281.3"/></g></svg><div class="a" style="left:422px;top:130px;width:806px;height:2px;background:#1a1a1a"></div><svg style="left:0;top:0" width="1706" height="960"><polygon points="668.5,253 1130,258 1124,551 644,487" fill="none" stroke="#f3dcdc" stroke-width="1.6"/><line x1="739.5" y1="349" x2="668.5" y2="253" stroke="#f3dcdc" stroke-width="1.4"/><line x1="739.5" y1="349" x2="1130" y2="258" stroke="#f3dcdc" stroke-width="1.4"/><line x1="739.5" y1="349" x2="1124" y2="551" stroke="#f3dcdc" stroke-width="1.4"/><line x1="739.5" y1="349" x2="644" y2="487" stroke="#f3dcdc" stroke-width="1.4"/><polygon points="739.5,349 732,243.5 935,244 926,359" fill="none" stroke="#f3dcdc" stroke-width="1.4"/><rect x="727" y="337" width="25" height="26" fill="none" stroke="#8c8a99" stroke-width="1"/><line x1="739.5" y1="349" x2="733" y2="262" stroke="#7bd44a" stroke-width="2.2"/><polygon points="732.5,243 725.5,268 740,268" fill="#6fdc3c"/><line x1="739.5" y1="349" x2="820" y2="353.5" stroke="#e24a4a" stroke-width="2"/><polygon points="838,354 816,346.5 816,361" fill="#e31c1c"/><rect x="760" y="325" width="9" height="10" rx="1.5" fill="#2a4ef0"/><line x1="739.5" y1="349" x2="752" y2="341" stroke="#6a5af0" stroke-width="1.5"/><line x1="1113" y1="142.5" x2="1131" y2="142.5" stroke="#3a4a60" stroke-width="1.5"/><line x1="1113" y1="146.5" x2="1131" y2="146.5" stroke="#3a4a60" stroke-width="1.5"/><polygon points="1166,181 1158,160 1174,160" fill="#8fdc50"/><polygon points="1177,193 1201,185 1201,201" fill="#e23a3a"/><polygon points="1157,193 1136,187 1136,199" fill="#dcdcdc" opacity="0.85"/><polygon points="1166,202 1159,219 1173,219" fill="#dcdcdc" opacity="0.8"/><rect x="1157" y="185" width="16" height="16" fill="#f6f6f6"/><text x="1160" y="157" font-family="Liberation Sans" font-size="13" font-weight="bold" fill="#eef4fa">y</text><text x="1200" y="198" font-family="Liberation Sans" font-size="12" font-weight="bold" fill="#f4f4f4">x</text><g opacity="0.55"><rect x="1198" y="156" width="9" height="7" rx="1" fill="#e6eef6"/><path d="M1200 156 V153.5 A2.5 2.5 0 0 1 1205 153.5 V156" fill="none" stroke="#e6eef6" stroke-width="1.3"/></g></svg>
<div class="a" style="left:426px;top:135px;width:41px;height:186px;background:#1c1f24;border-radius:4px"></div>
<div class="a" style="left:437px;top:142px;width:19px;height:1px;background:#4a4f58"></div><div class="a" style="left:437px;top:146px;width:19px;height:1px;background:#4a4f58"></div>
<div class="a" style="left:429px;top:155px;width:35px;height:20px;background:#3a3a3a"></div>
<div class="a" style="left:429px;top:176px;width:35px;height:23px;background:#2b4f78"></div>
<div class="a" style="left:429px;top:200px;width:35px;height:21px;background:#3a3a3a"></div>
<div class="a" style="left:429px;top:222px;width:35px;height:23px;background:#3a3a3a"></div>
<div class="a" style="left:429px;top:246px;width:35px;height:23px;background:#3a3a3a"></div>
<div class="a" style="left:429px;top:270px;width:35px;height:21px;background:#3a3a3a"></div>
<div class="a" style="left:429px;top:296px;width:35px;height:21px;background:#3a3a3a"></div>
<svg style="left:438px;top:157.0px" width="16" height="16" viewBox="0 0 16 16"><path d="M5 15 Q2 11 2 8 L3.5 7 L5 9 V2.5 A1 1 0 0 1 7 2.5 V7 V1.5 A1 1 0 0 1 9 1.5 V7 V2 A1 1 0 0 1 11 2 V7.5 V4 A1 1 0 0 1 13 4 V10 Q13 14 11 15Z" fill="#c8c8c8"/></svg>
<svg style="left:438px;top:179.5px" width="16" height="16" viewBox="0 0 16 16"><path d="M8 1 V15 M1 8 H15" stroke="#d8e2ec" stroke-width="1.2"/><path d="M5.5 3.5 L8 1 L10.5 3.5 M5.5 12.5 L8 15 L10.5 12.5 M3.5 5.5 L1 8 L3.5 10.5 M12.5 5.5 L15 8 L12.5 10.5" fill="none" stroke="#d8e2ec" stroke-width="1.2"/></svg>
<svg style="left:438px;top:202.5px" width="16" height="16" viewBox="0 0 16 16"><path d="M3 10 A5.5 5.5 0 0 1 10 2.5 M13 6 A5.5 5.5 0 0 1 6 13.5" fill="none" stroke="#c4c4c4" stroke-width="1.3"/><path d="M9 0.5 L11 2.8 L8.5 4.5 M7 15.5 L5 13.2 L7.5 11.5" fill="none" stroke="#c4c4c4" stroke-width="1.2"/></svg>
<svg style="left:438px;top:225.5px" width="16" height="16" viewBox="0 0 16 16"><rect x="1.5" y="1.5" width="13" height="13" fill="none" stroke="#c4c4c4" stroke-width="1.3"/><path d="M5 11 L11 5 M7.5 5 H11 V8.5" fill="none" stroke="#c4c4c4" stroke-width="1.2"/></svg>
<svg style="left:438px;top:249.5px" width="16" height="16" viewBox="0 0 16 16"><rect x="2.5" y="2.5" width="11" height="11" fill="none" stroke="#c4c4c4" stroke-width="1.1"/><rect x="1" y="1" width="3" height="3" fill="#c4c4c4"/><rect x="12" y="1" width="3" height="3" fill="#c4c4c4"/><rect x="1" y="12" width="3" height="3" fill="#c4c4c4"/><rect x="12" y="12" width="3" height="3" fill="#c4c4c4"/></svg>
<svg style="left:438px;top:272.5px" width="16" height="16" viewBox="0 0 16 16"><circle cx="8" cy="8" r="6.5" fill="none" stroke="#c4c4c4" stroke-width="1.2"/><path d="M8 3 V13 M3 8 H13" stroke="#c4c4c4" stroke-width="1.1"/><path d="M6.5 4.5 L8 3 L9.5 4.5 M6.5 11.5 L8 13 L9.5 11.5 M4.5 6.5 L3 8 L4.5 9.5 M11.5 6.5 L13 8 L11.5 9.5" fill="none" stroke="#c4c4c4" stroke-width="1"/></svg>
<svg style="left:438px;top:298.5px" width="16" height="16" viewBox="0 0 16 16"><path d="M3 13 L8 3 L13 13" fill="none" stroke="#c4c4c4" stroke-width="1.2"/><rect x="6.5" y="1.5" width="3" height="3" fill="#3a3a3a" stroke="#c4c4c4" stroke-width="1"/><rect x="1.5" y="11.5" width="3" height="3" fill="#3a3a3a" stroke="#c4c4c4" stroke-width="1"/><rect x="11.5" y="11.5" width="3" height="3" fill="#3a3a3a" stroke="#c4c4c4" stroke-width="1"/></svg>
<div class="a" style="left:1228px;top:82px;width:2px;height:503px;background:#191919"></div><div class="a" style="left:1230px;top:82px;width:476px;height:21px;background:#1d1d1d"></div>
<div class="a" style="left:1230px;top:82px;width:106px;height:21px;background:#282828"></div>
<svg style="left:1240px;top:87px" width="12" height="12" viewBox="0 0 12 12"><circle cx="6" cy="6" r="5.8" fill="#c4c4c4"/><rect x="5.1" y="5" width="1.8" height="4.5" fill="#282828"/><circle cx="6" cy="3.2" r="1" fill="#282828"/></svg>
<div class="t" style="left:1257px;top:84.0px;color:#c8c8c8;letter-spacing:0.3px;font-size:13px">Inspector</div>
<svg style="left:1667px;top:86px" width="10" height="11" viewBox="0 0 10 11"><path d="M3 5 V2.5 A2 2 0 0 1 7 2.5 V3" fill="none" stroke="#c4c4c4" stroke-width="1.2"/><rect x="0.6" y="5.6" width="8.8" height="4.8" fill="none" stroke="#c4c4c4" stroke-width="1.2"/></svg>
<svg style="left:1689px;top:86px" width="4" height="12" viewBox="0 0 4 12"><circle cx="2" cy="1.6" r="1.5" fill="#c4c4c4"/><circle cx="2" cy="5.8" r="1.5" fill="#c4c4c4"/><circle cx="2" cy="10" r="1.5" fill="#c4c4c4"/></svg>
<div class="a" style="left:1230px;top:103px;width:476px;height:834px;background:#2d2d2d"></div>
<div class="a" style="left:1694px;top:103px;width:12px;height:834px;background:#2a2a2a"></div>
<div class="a" style="left:1696px;top:483px;width:9px;height:435px;background:#4a4a4a;border-radius:5px"></div>
<svg style="left:1695px;top:109px" width="10" height="6"><path d="M0 5.5 H10 L5 0Z" fill="#c4c4c4"/></svg>
<svg style="left:1695px;top:925px" width="10" height="6"><path d="M0 0 H10 L5 5.5Z" fill="#c4c4c4"/></svg>
<div class="t" style="left:1252px;top:102.5px;color:#c4c4c4;letter-spacing:0.5px;font-size:13px">Direction</div>
<div class="a" style="left:1423px;top:104px;width:265px;height:17px;background:#3e3e3e;border-radius:2px;border-bottom:1px solid #242424"></div>
<div class="t" style="left:1427px;top:103.5px;color:#c4c4c4;letter-spacing:0.5px;font-size:13px">Y-Axis</div>
<svg style="left:1674px;top:110.0px" width="9" height="6"><path d="M0 0 H9 L4.5 5.5Z" fill="#c4c4c4"/></svg>
<svg style="left:1239px;top:129.5px" width="7" height="9"><path d="M0 0 V9 L7 4.5Z" fill="#5c5c5c"/></svg>
<div class="t" style="left:1252px;top:125.0px;color:#c4c4c4;letter-spacing:0.5px;font-size:13px">Layer Overrides</div>
<div class="a" style="left:1230px;top:152px;width:464px;height:1px;background:#1c1c1c"></div>
<div class="a" style="left:1230px;top:153px;width:464px;height:23px;background:#303030"></div>
<svg style="left:1238px;top:161.5px" width="9" height="7"><path d="M0 0 H9 L4.5 7Z" fill="#5c5c5c"/></svg>
<svg style="left:1253px;top:156.0px" width="17" height="17" viewBox="0 0 17 17"><rect x="0" y="0" width="17" height="17" fill="#36334a"/><rect x="1.5" y="1.5" width="13" height="13" fill="none" stroke="#8a86c8" stroke-width="1.1" stroke-dasharray="3 2"/><ellipse cx="9.5" cy="11.5" rx="5" ry="3" fill="#c8c8c8"/><circle cx="9.5" cy="11.5" r="1.5" fill="#36334a"/><circle cx="8" cy="6" r="2.2" fill="#a8a8a8"/></svg>
<div class="a" style="left:1275px;top:157.5px;width:14px;height:14px;background:#1e1e1e;border-radius:2px"></div>
<svg style="left:1277px;top:160.5px" width="10" height="8"><path d="M1 4 L4 7 L9 1" fill="none" stroke="#e8e8e8" stroke-width="1.6"/></svg>
<div class="t b" style="left:1297px;top:155.5px;color:#d2d2d2;letter-spacing:0.3px;font-size:13px">Sprite Renderer</div>
<svg style="left:1628px;top:158.5px" width="12" height="12" viewBox="0 0 12 12"><circle cx="6" cy="6" r="5.8" fill="#c4c4c4"/><path d="M4 4.6 A2 2 0 1 1 6.8 6.2 Q6 6.6 6 7.6" fill="none" stroke="#303030" stroke-width="1.5"/><circle cx="6" cy="9.4" r="0.9" fill="#303030"/></svg>
<svg style="left:1650px;top:158.5px" width="13" height="12" viewBox="0 0 13 12"><path d="M1 3.5 H12 M1 8.5 H12" stroke="#c4c4c4" stroke-width="1.3"/><rect x="7" y="1" width="3" height="5" fill="#c4c4c4"/><rect x="3" y="6" width="3" height="5" fill="#c4c4c4"/></svg>
<svg style="left:1677px;top:158.5px" width="4" height="12" viewBox="0 0 4 12"><circle cx="2" cy="1.6" r="1.4" fill="#c4c4c4"/><circle cx="2" cy="5.8" r="1.4" fill="#c4c4c4"/><circle cx="2" cy="10" r="1.4" fill="#c4c4c4"/></svg>
<div class="t" style="left:1252px;top:183.5px;color:#c4c4c4;letter-spacing:0.5px;font-size:13px">Sprite</div>
<div class="a" style="left:1423px;top:183px;width:265px;height:18px;background:#1f1f1f;border-radius:2px"></div>
<div class="a" style="left:1669px;top:183px;width:19px;height:18px;background:#262626;border-radius:0 2px 2px 0"></div>
<svg style="left:1427px;top:186px" width="12" height="12" viewBox="0 0 12 12"><rect x="0.5" y="0.5" width="11" height="11" fill="#35324a" stroke="#8a86c8" stroke-width="1"/><rect x="3.5" y="3.5" width="5" height="5" fill="#c8c8d8"/></svg>
<div class="t" style="left:1440px;top:183.0px;color:#c4c4c4;letter-spacing:0.5px;font-size:13px">ChatGPT Image Aug 6, 2025, 06_16.</div>
<svg style="left:1672px;top:186.0px" width="12" height="12" viewBox="0 0 12 12"><circle cx="6" cy="6" r="5" fill="none" stroke="#c4c4c4" stroke-width="1.3"/><circle cx="6" cy="6" r="1.7" fill="#c4c4c4"/></svg>
<div class="t" style="left:1252px;top:205.5px;color:#c4c4c4;letter-spacing:0.5px;font-size:13px">Color</div>
<div class="a" style="left:1423px;top:204px;width:244px;height:19px;background:#ffffff"></div>
<div class="a" style="left:1669px;top:204px;width:19px;height:19px;background:#2a2a2a;border-radius:2px"></div>
<svg style="left:1672px;top:207px" width="13" height="13" viewBox="0 0 13 13"><path d="M1 12 L2 9 L8 3 L10 5 L4 11Z" fill="#b8b8b8"/><path d="M8 1 L12 5 M9.5 0.5 Q12.5 0.5 12.5 3.5" stroke="#b8b8b8" stroke-width="2"/></svg>
<div class="t" style="left:1252px;top:227.5px;color:#c4c4c4;letter-spacing:0.5px;font-size:13px">Flip</div>
<div class="a" style="left:1423px;top:229px;width:15px;height:15px;background:#232323;border-radius:2px"></div>
<div class="t" style="left:1442px;top:227.5px;color:#c4c4c4;letter-spacing:0.5px;font-size:13px">X</div>
<div class="a" style="left:1456px;top:229px;width:15px;height:15px;background:#232323;border-radius:2px"></div>
<div class="t" style="left:1475px;top:227.5px;color:#c4c4c4;letter-spacing:0.5px;font-size:13px">Y</div>
<div class="t" style="left:1252px;top:249.5px;color:#c4c4c4;letter-spacing:0.5px;font-size:13px">Draw Mode</div>
<div class="a" style="left:1423px;top:249px;width:265px;height:18px;background:#3e3e3e;border-radius:2px;border-bottom:1px solid #242424"></div>
<div class="t" style="left:1427px;top:249.0px;color:#c4c4c4;letter-spacing:0.5px;font-size:13px">Simple</div>
<svg style="left:1674px;top:255.5px" width="9" height="6"><path d="M0 0 H9 L4.5 5.5Z" fill="#c4c4c4"/></svg>
<div class="t" style="left:1252px;top:271.5px;color:#c4c4c4;letter-spacing:0.5px;font-size:13px">Mask Interaction</div>
<div class="a" style="left:1423px;top:271px;width:265px;height:19px;background:#3e3e3e;border-radius:2px;border-bottom:1px solid #242424"></div>
<div class="t" style="left:1427px;top:271.5px;color:#c4c4c4;letter-spacing:0.5px;font-size:13px">None</div>
<svg style="left:1674px;top:278.0px" width="9" height="6"><path d="M0 0 H9 L4.5 5.5Z" fill="#c4c4c4"/></svg>
<div class="t" style="left:1252px;top:293.5px;color:#c4c4c4;letter-spacing:0.5px;font-size:13px">Sprite Sort Point</div>
<div class="a" style="left:1423px;top:294px;width:265px;height:18px;background:#3e3e3e;border-radius:2px;border-bottom:1px solid #242424"></div>
<div class="t" style="left:1427px;top:294.0px;color:#c4c4c4;letter-spacing:0.5px;font-size:13px">Center</div>
<svg style="left:1674px;top:300.5px" width="9" height="6"><path d="M0 0 H9 L4.5 5.5Z" fill="#c4c4c4"/></svg>
<div class="t" style="left:1252px;top:316.0px;color:#c4c4c4;letter-spacing:0.5px;font-size:13px">Material</div>
<div class="a" style="left:1423px;top:316px;width:265px;height:19px;background:#1f1f1f;border-radius:2px"></div>
<div class="a" style="left:1669px;top:316px;width:19px;height:19px;background:#262626;border-radius:0 2px 2px 0"></div>
<svg style="left:1426px;top:319px" width="13" height="13" viewBox="0 0 13 13"><circle cx="6.5" cy="6.5" r="6" fill="#3f8fb0"/><circle cx="5" cy="5" r="3" fill="#8fd0e8"/><path d="M1.5 8 A6 6 0 0 0 11 9.5" fill="none" stroke="#1d4f66" stroke-width="1.5"/></svg>
<div class="t" style="left:1440px;top:316.5px;color:#c4c4c4;letter-spacing:0.5px;font-size:13px">Sprites-Default</div>
<svg style="left:1672px;top:319.5px" width="12" height="12" viewBox="0 0 12 12"><circle cx="6" cy="6" r="5" fill="none" stroke="#c4c4c4" stroke-width="1.3"/><circle cx="6" cy="6" r="1.7" fill="#c4c4c4"/></svg>
<svg style="left:1238px;top:343px" width="9" height="7"><path d="M0 0 H9 L4.5 7Z" fill="#5c5c5c"/></svg>
<div class="t b" style="left:1252px;top:338.0px;color:#c8c8c8;letter-spacing:0.3px;font-size:13px">Additional Settings</div>
<div class="t" style="left:1268px;top:360.5px;color:#c4c4c4;letter-spacing:0.5px;font-size:13px">Sorting Layer</div>
<div class="a" style="left:1423px;top:360px;width:265px;height:18px;background:#3e3e3e;border-radius:2px;border-bottom:1px solid #242424"></div>
<div class="t" style="left:1427px;top:360.0px;color:#c4c4c4;letter-spacing:0.5px;font-size:13px">Default</div>
<svg style="left:1674px;top:366.5px" width="9" height="6"><path d="M0 0 H9 L4.5 5.5Z" fill="#c4c4c4"/></svg>
<div class="t" style="left:1268px;top:383.0px;color:#c4c4c4;letter-spacing:0.5px;font-size:13px">Order in Layer</div>
<div class="a" style="left:1423px;top:383px;width:265px;height:18px;background:#1f1f1f;border-radius:2px;border-top:1px solid #181818"></div>
<div class="t" style="left:1427px;top:383.0px;color:#c4c4c4;letter-spacing:0.5px;font-size:13px">0</div>
<div class="a" style="left:1230px;top:411px;width:464px;height:1.5px;background:#1c1c1c"></div>
<div class="a" style="left:1230px;top:412px;width:464px;height:24px;background:#303030"></div>
<svg style="left:1238px;top:421.0px" width="9" height="7"><path d="M0 0 H9 L4.5 7Z" fill="#5c5c5c"/></svg>
<svg style="left:1254px;top:415.5px" width="14" height="17" viewBox="0 0 14 17"><path d="M0 0 H10 L14 4 V17 H0Z" fill="#d8d8d8"/><path d="M5 5 L4 13 M8.5 5 L7.5 13 M2.5 7.5 H11 M2 10.5 H10.5" stroke="#2f7a3a" stroke-width="1.2"/></svg>
<div class="a" style="left:1275px;top:417.0px;width:14px;height:14px;background:#1e1e1e;border-radius:2px"></div>
<svg style="left:1277px;top:420.0px" width="10" height="8"><path d="M1 4 L4 7 L9 1" fill="none" stroke="#e8e8e8" stroke-width="1.6"/></svg>
<div class="t b" style="left:1297px;top:415.0px;color:#d2d2d2;letter-spacing:0.3px;font-size:13px">Player Controller (Script)</div>
<svg style="left:1628px;top:418.0px" width="12" height="12" viewBox="0 0 12 12"><circle cx="6" cy="6" r="5.8" fill="#c4c4c4"/><path d="M4 4.6 A2 2 0 1 1 6.8 6.2 Q6 6.6 6 7.6" fill="none" stroke="#303030" stroke-width="1.5"/><circle cx="6" cy="9.4" r="0.9" fill="#303030"/></svg>
<svg style="left:1650px;top:418.0px" width="13" height="12" viewBox="0 0 13 12"><path d="M1 3.5 H12 M1 8.5 H12" stroke="#c4c4c4" stroke-width="1.3"/><rect x="7" y="1" width="3" height="5" fill="#c4c4c4"/><rect x="3" y="6" width="3" height="5" fill="#c4c4c4"/></svg>
<svg style="left:1677px;top:418.0px" width="4" height="12" viewBox="0 0 4 12"><circle cx="2" cy="1.6" r="1.4" fill="#c4c4c4"/><circle cx="2" cy="5.8" r="1.4" fill="#c4c4c4"/><circle cx="2" cy="10" r="1.4" fill="#c4c4c4"/></svg>
<div class="t" style="left:1252px;top:442.0px;color:#6e6e6e;letter-spacing:0.5px;font-size:13px">Script</div>
<div class="a" style="left:1423px;top:441px;width:265px;height:19px;background:#282828;border-radius:2px"></div>
<svg style="left:1428px;top:444px" width="11" height="13" viewBox="0 0 11 13"><path d="M0 0 H8 L11 3 V13 H0Z" fill="#6a6a6a"/><path d="M3 4 V10 M6 4 V10" stroke="#383838" stroke-width="1.2"/></svg>
<div class="t" style="left:1442px;top:441.5px;color:#707070;letter-spacing:0.5px;font-size:13px">PlayerController</div>
<svg style="left:1670px;top:444.5px" width="12" height="12" viewBox="0 0 12 12"><circle cx="6" cy="6" r="5" fill="none" stroke="#5a5a5a" stroke-width="1.3"/><circle cx="6" cy="6" r="1.7" fill="#5a5a5a"/></svg>
<div class="t b" style="left:1252px;top:474.5px;color:#c8c8c8;letter-spacing:0.3px;font-size:13px">Refs</div>
<div class="t" style="left:1252px;top:495.0px;color:#c4c4c4;letter-spacing:0.5px;font-size:13px">The RB</div>
<div class="a" style="left:1423px;top:494px;width:265px;height:19px;background:#1f1f1f;border-radius:2px"></div>
<div class="a" style="left:1669px;top:494px;width:19px;height:19px;background:#262626;border-radius:0 2px 2px 0"></div>
<svg style="left:1427px;top:497px" width="13" height="13" viewBox="0 0 13 13"><circle cx="6.5" cy="6.5" r="6" fill="#5fb13a"/><path d="M6.5 0.5 A6 6 0 0 1 12.5 6.5 H6.5Z M6.5 12.5 A6 6 0 0 1 0.5 6.5 H6.5Z" fill="#e8e8e8"/></svg>
<div class="t" style="left:1443px;top:494.5px;color:#c4c4c4;letter-spacing:0.5px;font-size:13px">Player (Rigidbody)</div>
<svg style="left:1672px;top:497.5px" width="12" height="12" viewBox="0 0 12 12"><circle cx="6" cy="6" r="5" fill="none" stroke="#c4c4c4" stroke-width="1.3"/><circle cx="6" cy="6" r="1.7" fill="#c4c4c4"/></svg>
<div class="t b" style="left:1252px;top:528.0px;color:#c8c8c8;letter-spacing:0.3px;font-size:13px">Move Settings</div>
<div class="t" style="left:1252px;top:548.5px;color:#c4c4c4;letter-spacing:0.5px;font-size:13px">Move Speed</div>
<div class="a" style="left:1423px;top:548px;width:265px;height:19px;background:#1f1f1f;border-radius:2px;border-top:1px solid #181818"></div>
<div class="t" style="left:1427px;top:548.5px;color:#c4c4c4;letter-spacing:0.5px;font-size:13px">20</div>
<div class="a" style="left:1230px;top:575px;width:464px;height:2px;background:#1c1c1c"></div>
<div class="a" style="left:1230px;top:577px;width:464px;height:23px;background:#303030"></div>
<svg style="left:1238px;top:585.5px" width="9" height="7"><path d="M0 0 H9 L4.5 7Z" fill="#5c5c5c"/></svg>
<svg style="left:1253px;top:580.0px" width="17" height="17" viewBox="0 0 17 17"><path d="M1 2 Q6 2 7 8.5 Q6 15 1 15" fill="none" stroke="#7ab8a0" stroke-width="1.6"/><path d="M7 8.5 H15 M12 5.5 L15 8.5 L12 11.5" fill="none" stroke="#c8c8c8" stroke-width="1.6"/></svg>
<div class="a" style="left:1275px;top:581.5px;width:14px;height:14px;background:#1e1e1e;border-radius:2px"></div>
<svg style="left:1277px;top:584.5px" width="10" height="8"><path d="M1 4 L4 7 L9 1" fill="none" stroke="#e8e8e8" stroke-width="1.6"/></svg>
<div class="t b" style="left:1297px;top:579.5px;color:#d2d2d2;letter-spacing:0.3px;font-size:13px">Animator</div>
<svg style="left:1628px;top:582.5px" width="12" height="12" viewBox="0 0 12 12"><circle cx="6" cy="6" r="5.8" fill="#c4c4c4"/><path d="M4 4.6 A2 2 0 1 1 6.8 6.2 Q6 6.6 6 7.6" fill="none" stroke="#303030" stroke-width="1.5"/><circle cx="6" cy="9.4" r="0.9" fill="#303030"/></svg>
<svg style="left:1650px;top:582.5px" width="13" height="12" viewBox="0 0 13 12"><path d="M1 3.5 H12 M1 8.5 H12" stroke="#c4c4c4" stroke-width="1.3"/><rect x="7" y="1" width="3" height="5" fill="#c4c4c4"/><rect x="3" y="6" width="3" height="5" fill="#c4c4c4"/></svg>
<svg style="left:1677px;top:582.5px" width="4" height="12" viewBox="0 0 4 12"><circle cx="2" cy="1.6" r="1.4" fill="#c4c4c4"/><circle cx="2" cy="5.8" r="1.4" fill="#c4c4c4"/><circle cx="2" cy="10" r="1.4" fill="#c4c4c4"/></svg>
<div class="t" style="left:1252px;top:606.5px;color:#c4c4c4;letter-spacing:0.5px;font-size:13px">Controller</div>
<div class="a" style="left:1423px;top:607px;width:265px;height:18px;background:#1f1f1f;border-radius:2px"></div>
<div class="a" style="left:1669px;top:607px;width:19px;height:18px;background:#262626;border-radius:0 2px 2px 0"></div>
<svg style="left:1427px;top:610px" width="12" height="12" viewBox="0 0 12 12"><rect x="0" y="0" width="4" height="4" fill="#c8c8c8"/><rect x="7" y="7" width="5" height="5" fill="#c8c8c8"/><path d="M4 2 H6 V9 H7" fill="none" stroke="#4a9a7a" stroke-width="1.2"/></svg>
<div class="t" style="left:1440px;top:607.0px;color:#c4c4c4;letter-spacing:0.5px;font-size:13px">ChatGPT Image Aug 6, 2025, 06_16.</div>
<svg style="left:1672px;top:610.0px" width="12" height="12" viewBox="0 0 12 12"><circle cx="6" cy="6" r="5" fill="none" stroke="#c4c4c4" stroke-width="1.3"/><circle cx="6" cy="6" r="1.7" fill="#c4c4c4"/></svg>
<div class="t" style="left:1252px;top:628.5px;color:#c4c4c4;letter-spacing:0.5px;font-size:13px">Avatar</div>
<div class="a" style="left:1423px;top:628px;width:265px;height:19px;background:#1f1f1f;border-radius:2px"></div>
<div class="a" style="left:1669px;top:628px;width:19px;height:19px;background:#262626;border-radius:0 2px 2px 0"></div>
<div class="t" style="left:1427px;top:628.5px;color:#c4c4c4;letter-spacing:0.5px;font-size:13px">None (Avatar)</div>
<svg style="left:1672px;top:631.5px" width="12" height="12" viewBox="0 0 12 12"><circle cx="6" cy="6" r="5" fill="none" stroke="#c4c4c4" stroke-width="1.3"/><circle cx="6" cy="6" r="1.7" fill="#c4c4c4"/></svg>
<div class="t" style="left:1252px;top:651.0px;color:#c4c4c4;letter-spacing:0.5px;font-size:13px">Apply Root Motion</div>
<div class="a" style="left:1423px;top:652px;width:15px;height:15px;background:#232323;border-radius:2px"></div>
<div class="t" style="left:1252px;top:673.0px;color:#c4c4c4;letter-spacing:0.5px;font-size:13px">Update Mode</div>
<div class="a" style="left:1423px;top:673px;width:265px;height:18px;background:#3e3e3e;border-radius:2px;border-bottom:1px solid #242424"></div>
<div class="t" style="left:1427px;top:673.0px;color:#c4c4c4;letter-spacing:0.5px;font-size:13px">Normal</div>
<svg style="left:1674px;top:679.5px" width="9" height="6"><path d="M0 0 H9 L4.5 5.5Z" fill="#c4c4c4"/></svg>
<div class="t" style="left:1252px;top:695.0px;color:#c4c4c4;letter-spacing:0.5px;font-size:13px">Culling Mode</div>
<div class="a" style="left:1423px;top:695px;width:265px;height:18px;background:#3e3e3e;border-radius:2px;border-bottom:1px solid #242424"></div>
<div class="t" style="left:1427px;top:695.0px;color:#c4c4c4;letter-spacing:0.5px;font-size:13px">Always Animate</div>
<svg style="left:1674px;top:701.5px" width="9" height="6"><path d="M0 0 H9 L4.5 5.5Z" fill="#c4c4c4"/></svg>
<div class="a" style="left:1251px;top:717px;width:437px;height:86px;background:#2f2f2f;border:1px solid #232323;border-radius:3px"></div>
<svg style="left:1256px;top:744px" width="30" height="30" viewBox="0 0 30 30"><circle cx="14.5" cy="14" r="13.5" fill="#d4d4d4"/><path d="M21 24 L27 28 L24 20Z" fill="#d4d4d4"/><rect x="13" y="5" width="3.2" height="12" rx="1.5" fill="#2f2f2f"/><circle cx="14.6" cy="21" r="1.9" fill="#2f2f2f"/></svg>
<div class="t" style="left:1291px;top:719.8px;height:14px;line-height:14px;font-size:11.6px;color:#b4b4b4;letter-spacing:0.38px">Animator is visible</div>
<div class="t" style="left:1291px;top:733.0px;height:14px;line-height:14px;font-size:11.6px;color:#b4b4b4;letter-spacing:0.38px">Clip Count: 3</div>
<div class="t" style="left:1291px;top:746.2px;height:14px;line-height:14px;font-size:11.6px;color:#b4b4b4;letter-spacing:0.38px">Curves Pos: 0 Quat: 0 Euler: 0 Scale: 0 Muscles: 0 Generic: 0 PPtr: 3</div>
<div class="t" style="left:1291px;top:759.4px;height:14px;line-height:14px;font-size:11.6px;color:#b4b4b4;letter-spacing:0.38px">Curves Count: 3 Constant: 0 (0.0%) Dense: 0 (0.0%) Stream: 3</div>
<div class="t" style="left:1291px;top:772.6px;height:14px;line-height:14px;font-size:11.6px;color:#b4b4b4;letter-spacing:0.38px">(100.0%)</div>
<div class="a" style="left:1230px;top:811px;width:464px;height:2px;background:#1c1c1c"></div>
<div class="a" style="left:1252px;top:825px;width:28px;height:28px;background:#d9d9d9;border:1px solid #1e1e1e"></div>
<div class="t" style="left:1291px;top:819.5px;color:#a8a8a8;letter-spacing:0.8px;font-size:14px">Sprites-Default (Material)</div>
<svg style="left:1660px;top:822.5px" width="12" height="12" viewBox="0 0 12 12"><circle cx="6" cy="6" r="5.8" fill="#c4c4c4"/><path d="M4 4.6 A2 2 0 1 1 6.8 6.2 Q6 6.6 6 7.6" fill="none" stroke="#2d2d2d" stroke-width="1.5"/><circle cx="6" cy="9.4" r="0.9" fill="#2d2d2d"/></svg>
<svg style="left:1682px;top:822.5px" width="4" height="12" viewBox="0 0 4 12"><circle cx="2" cy="1.6" r="1.4" fill="#c4c4c4"/><circle cx="2" cy="5.8" r="1.4" fill="#c4c4c4"/><circle cx="2" cy="10" r="1.4" fill="#c4c4c4"/></svg>
<svg style="left:1239px;top:858px" width="7" height="9"><path d="M0 0 V9 L7 4.5Z" fill="#505050"/></svg>
<div class="t" style="left:1289px;top:846.5px;color:#6e6e6e;letter-spacing:0.5px;font-size:13px">Shader</div>
<div class="a" style="left:1347px;top:846px;width:234px;height:19px;background:#323232;border-radius:2px"></div>
<div class="t" style="left:1350px;top:846.0px;color:#6e6e6e;letter-spacing:0.5px;font-size:13px">Sprites/Default</div>
<svg style="left:1565px;top:852.5px" width="9" height="6"><path d="M0 0 H9 L4.5 5.5Z" fill="#6a6a6a"/></svg>
<div class="a" style="left:1583px;top:846px;width:52px;height:19px;background:#3c3c3c;border-radius:2px;border-bottom:1px solid #232323"></div>
<div class="t" style="left:1590px;top:846.0px;color:#c4c4c4;letter-spacing:0.5px;font-size:13px">Edit...</div>
<div class="a" style="left:1639px;top:846px;width:49px;height:19px;background:#363636;border-radius:2px"></div>
<svg style="left:1650px;top:850px" width="12" height="11" viewBox="0 0 12 11"><path d="M0 1 H11 M4 5 H11 M4 9 H11 M1.5 2 V9 H4" fill="none" stroke="#c4c4c4" stroke-width="1.2"/></svg>
<svg style="left:1672px;top:852.5px" width="9" height="6"><path d="M0 0 H9 L4.5 5.5Z" fill="#c4c4c4"/></svg>
<div class="a" style="left:1230px;top:874px;width:464px;height:1px;background:#1c1c1c"></div>
<div class="a" style="left:1230px;top:875px;width:464px;height:12px;background:#292929"></div>
<div class="a" style="left:1230px;top:886px;width:464px;height:1px;background:#1c1c1c"></div>
<div class="a" style="left:1335px;top:898px;width:253px;height:24px;background:#454545;border-radius:3px;border-bottom:1px solid #232323"></div>
<div class="t" style="left:1335px;top:902px;width:253px;text-align:center;color:#d2d2d2;letter-spacing:0.3px">Add Component</div><div class="a" style="left:0;top:584px;width:1228px;height:1px;background:#191919"></div>
<div class="a" style="left:0;top:585px;width:527px;height:22px;background:#1d1d1d"></div>
<div class="a" style="left:0;top:585px;width:90px;height:22px;background:#282828"></div>
<svg style="left:8px;top:591px" width="13" height="11" viewBox="0 0 13 11"><path d="M0 0 H5 L6.5 2 H13 V11 H0Z" fill="#c4c4c4"/></svg>
<div class="t" style="left:25px;top:588.5px;color:#c8c8c8;letter-spacing:0.3px;font-size:13px">Project</div>
<svg style="left:101px;top:590px" width="12" height="13" viewBox="0 0 12 13"><rect x="0.6" y="0.6" width="10.8" height="11.8" fill="none" stroke="#c4c4c4" stroke-width="1.2"/><path d="M3 4 H9 M3 6.5 H9 M3 9 H9" stroke="#c4c4c4" stroke-width="1.2"/></svg>
<div class="t" style="left:117px;top:588.5px;color:#c8c8c8;letter-spacing:0.3px;font-size:13px">Console</div>
<svg style="left:198px;top:590px" width="13" height="13" viewBox="0 0 13 13"><circle cx="6.5" cy="6.5" r="6.2" fill="#c4c4c4"/><path d="M6.5 2.5 V6.5 H3" fill="none" stroke="#1d1d1d" stroke-width="1.6"/></svg>
<div class="t" style="left:216px;top:588.5px;color:#c8c8c8;letter-spacing:0.3px;font-size:13px">Animation</div>
<svg style="left:309px;top:590px" width="13" height="13" viewBox="0 0 13 13"><path d="M2 0 V13 M6.5 0 V13 M11 0 V13" stroke="#c4c4c4" stroke-width="1.1"/><rect x="0" y="6" width="4" height="2.5" fill="#c4c4c4"/><rect x="4.5" y="3" width="4" height="2.5" fill="#c4c4c4"/><rect x="9" y="8" width="4" height="2.5" fill="#c4c4c4"/></svg>
<div class="t" style="left:327px;top:588.5px;color:#c8c8c8;letter-spacing:0.3px;font-size:13px">Audio Mixer</div>
<svg style="left:487px;top:590px" width="10" height="11" viewBox="0 0 10 11"><path d="M3 5 V2.5 A2 2 0 0 1 7 2.5 V3" fill="none" stroke="#c4c4c4" stroke-width="1.2"/><rect x="0.6" y="5.6" width="8.8" height="4.8" fill="none" stroke="#c4c4c4" stroke-width="1.2"/></svg>
<svg style="left:509px;top:590px" width="4" height="12" viewBox="0 0 4 12"><circle cx="2" cy="1.6" r="1.5" fill="#c4c4c4"/><circle cx="2" cy="5.8" r="1.5" fill="#c4c4c4"/><circle cx="2" cy="10" r="1.5" fill="#c4c4c4"/></svg>
<div class="a" style="left:0;top:607px;width:527px;height:24px;background:#282828"></div>
<div class="a" style="left:0;top:630px;width:527px;height:1px;background:#1a1a1a"></div>
<svg style="left:8px;top:612px" width="13" height="13"><path d="M6.5 0 V13 M0 6.5 H13" stroke="#c8c8c8" stroke-width="1.5"/></svg>
<svg style="left:26px;top:616px" width="9" height="6"><path d="M0 0 H9 L4.5 5.5Z" fill="#c4c4c4"/></svg>
<div class="a" style="left:50px;top:610px;width:290px;height:18px;background:#202020;border-radius:3px;border-top:1px solid #151515"></div>
<svg style="left:55px;top:614px" width="10" height="10" viewBox="0 0 10 10"><circle cx="4" cy="4" r="2.8" fill="none" stroke="#b4b4b4" stroke-width="1.3"/><path d="M6 6 L9 9" stroke="#b4b4b4" stroke-width="1.5"/></svg>
<svg style="left:344px;top:612px" width="13" height="14" viewBox="0 0 13 14"><rect x="3" y="0.6" width="9.4" height="9.4" fill="none" stroke="#a8a8a8" stroke-width="1.2"/><rect x="0.6" y="9" width="4" height="4" fill="#282828" stroke="#a8a8a8" stroke-width="1.2"/><path d="M5 8 L10 3 M6.5 3 H10 V6.5" fill="none" stroke="#a8a8a8" stroke-width="1.2"/></svg>
<div class="a" style="left:364px;top:609px;width:1px;height:21px;background:#1c1c1c"></div>
<div class="a" style="left:391px;top:609px;width:1px;height:21px;background:#1c1c1c"></div>
<div class="a" style="left:420px;top:609px;width:1px;height:21px;background:#1c1c1c"></div>
<div class="a" style="left:449px;top:609px;width:1px;height:21px;background:#1c1c1c"></div>
<div class="a" style="left:478px;top:609px;width:1px;height:21px;background:#1c1c1c"></div>
<svg style="left:371px;top:611px" width="14" height="15" viewBox="0 0 14 15"><rect x="0" y="0" width="6" height="6" fill="#c4c4c4"/><circle cx="4" cy="10.5" r="3.5" fill="#c4c4c4"/><path d="M8.5 8 L13.5 14 H8.5Z" fill="#c4c4c4"/></svg>
<svg style="left:398px;top:612px" width="14" height="13" viewBox="0 0 14 13"><path d="M0 7 L7 0 H13 V6 L6 13Z" fill="#c4c4c4"/><circle cx="10" cy="3" r="1.3" fill="#282828"/></svg>
<svg style="left:427px;top:611px" width="15" height="15" viewBox="0 0 15 15"><circle cx="7.5" cy="7.5" r="7.3" fill="#c4c4c4"/><rect x="6.3" y="3" width="2.4" height="6" rx="1" fill="#282828"/><circle cx="7.5" cy="11.3" r="1.2" fill="#282828"/></svg>
<svg style="left:457px;top:612px" width="13" height="13" viewBox="0 0 13 13"><path d="M6.5 0 L8.3 4.3 L13 4.7 L9.5 7.8 L10.5 12.5 L6.5 10 L2.5 12.5 L3.5 7.8 L0 4.7 L4.7 4.3Z" fill="#7a7a7a"/></svg>
<svg style="left:485px;top:614px" width="15" height="10" viewBox="0 0 15 10"><ellipse cx="7.5" cy="5" rx="7" ry="4.5" fill="#505050"/><circle cx="7.5" cy="5" r="2" fill="#3a3a3a"/></svg>
<div class="t" style="left:504px;top:610.5px;color:#c4c4c4;letter-spacing:0.2px;font-size:13px">40</div>
<div class="a" style="left:0;top:631px;width:527px;height:307px;background:#282828"></div>
<div class="a" style="left:133px;top:631px;width:1px;height:306px;background:#1c1c1c"></div>
<div class="a" style="left:134px;top:631px;width:393px;height:306px;background:#262626"></div>
<div class="a" style="left:134px;top:631px;width:393px;height:22px;background:#2e2e2e;border-bottom:1px solid #242424"></div>
<div class="t" style="left:139px;top:633.2px;color:#b8b8b8;letter-spacing:0.3px;font-size:13px">Assets</div>
<svg style="left:189px;top:637px" width="6" height="10"><path d="M0.5 0.5 L5 5 L0.5 9.5" fill="none" stroke="#9a9a9a" stroke-width="1.2"/></svg>
<div class="t" style="left:202px;top:633.2px;color:#b8b8b8;letter-spacing:0.3px;font-size:13px">Scripts</div>
<svg style="left:253px;top:637px" width="6" height="10"><path d="M0.5 0.5 L5 5 L0.5 9.5" fill="none" stroke="#9a9a9a" stroke-width="1.2"/></svg>
<div class="t b" style="left:266px;top:633.2px;color:#cfcfcf;letter-spacing:0.3px;font-size:13px">Game</div>
<div class="a" style="left:134px;top:914px;width:393px;height:23px;background:#2b2b2b;border-top:1px solid #222"></div>
<div class="a" style="left:448px;top:925px;width:60px;height:2px;background:#3f3f3f"></div>
<div class="a" style="left:476px;top:919.5px;width:12px;height:12px;background:#9a9a9a;border-radius:6px"></div>
<svg style="left:164.5px;top:670px" width="54" height="63" viewBox="0 0 54 63"><path d="M4 0 H40 L54 14 V59 A4 4 0 0 1 50 63 H4 A4 4 0 0 1 0 59 V4 A4 4 0 0 1 4 0Z" fill="#d2d2d2"/><path d="M17 13 L13 50 M31 13 L27 50 M9 25 H39 M8 38 H38" stroke="#1d6a22" stroke-width="6"/></svg>
<div class="t" style="left:141.5px;top:737.5px;width:100px;text-align:center;font-size:11.5px;color:#c0c0c0;letter-spacing:0.45px">GameAuto...</div>
<svg style="left:256.7px;top:670px" width="54" height="63" viewBox="0 0 54 63"><path d="M4 0 H40 L54 14 V59 A4 4 0 0 1 50 63 H4 A4 4 0 0 1 0 59 V4 A4 4 0 0 1 4 0Z" fill="#d2d2d2"/><path d="M17 13 L13 50 M31 13 L27 50 M9 25 H39 M8 38 H38" stroke="#1d6a22" stroke-width="6"/></svg>
<div class="t" style="left:233.7px;top:737.5px;width:100px;text-align:center;font-size:11.5px;color:#c0c0c0;letter-spacing:0.45px">GameFader</div>
<svg style="left:348.9px;top:670px" width="54" height="63" viewBox="0 0 54 63"><path d="M4 0 H40 L54 14 V59 A4 4 0 0 1 50 63 H4 A4 4 0 0 1 0 59 V4 A4 4 0 0 1 4 0Z" fill="#d2d2d2"/><path d="M17 13 L13 50 M31 13 L27 50 M9 25 H39 M8 38 H38" stroke="#1d6a22" stroke-width="6"/></svg>
<div class="t" style="left:325.9px;top:737.5px;width:100px;text-align:center;font-size:11.5px;color:#c0c0c0;letter-spacing:0.45px">MAP</div>
<svg style="left:441.1px;top:670px" width="54" height="63" viewBox="0 0 54 63"><path d="M4 0 H40 L54 14 V59 A4 4 0 0 1 50 63 H4 A4 4 0 0 1 0 59 V4 A4 4 0 0 1 4 0Z" fill="#d2d2d2"/><path d="M17 13 L13 50 M31 13 L27 50 M9 25 H39 M8 38 H38" stroke="#1d6a22" stroke-width="6"/></svg>
<div class="t" style="left:418.1px;top:737.5px;width:100px;text-align:center;font-size:11.5px;color:#c0c0c0;letter-spacing:0.45px">PauseMen...</div>
<svg style="left:164.5px;top:773px" width="54" height="63" viewBox="0 0 54 63"><path d="M4 0 H40 L54 14 V59 A4 4 0 0 1 50 63 H4 A4 4 0 0 1 0 59 V4 A4 4 0 0 1 4 0Z" fill="#d2d2d2"/><path d="M17 13 L13 50 M31 13 L27 50 M9 25 H39 M8 38 H38" stroke="#1d6a22" stroke-width="6"/></svg>
<div class="t" style="left:141.5px;top:841.5px;width:100px;text-align:center;font-size:11.5px;color:#c0c0c0;letter-spacing:0.45px">PlayerCont...</div>
<svg style="left:256.7px;top:773px" width="54" height="63" viewBox="0 0 54 63"><path d="M4 0 H40 L54 14 V59 A4 4 0 0 1 50 63 H4 A4 4 0 0 1 0 59 V4 A4 4 0 0 1 4 0Z" fill="#d2d2d2"/><path d="M17 13 L13 50 M31 13 L27 50 M9 25 H39 M8 38 H38" stroke="#1d6a22" stroke-width="6"/></svg>
<div class="t" style="left:233.7px;top:841.5px;width:100px;text-align:center;font-size:11.5px;color:#c0c0c0;letter-spacing:0.45px">SaveMana...</div>
<svg style="left:5px;top:640.3px" width="9" height="7"><path d="M0 0 H9 L4.5 7Z" fill="#5a5a5a"/></svg>
<svg style="left:20px;top:636.8px" width="17" height="13" viewBox="0 0 17 13"><path d="M0 0 H5.5 L7 2 H13 V4 H3 L0 12Z" fill="#c4c4c4"/><path d="M3.5 5 H17 L14 13 H0.5Z" fill="#c4c4c4"/></svg>
<div class="t b" style="left:40px;top:634.3px;color:#c4c4c4;letter-spacing:0.35px;width:80px;overflow:hidden">Assets</div>
<svg style="left:22px;top:656.6px" width="7" height="9"><path d="M0 0 V9 L7 4.5Z" fill="#5a5a5a"/></svg>
<svg style="left:35px;top:654.6px" width="14" height="12" viewBox="0 0 14 12"><path d="M0 0 H5.5 L7 2 H14 V12 H0Z" fill="#b8b8b8"/><path d="M0 3 H14" stroke="#282828" stroke-width="0.8"/></svg>
<div class="t" style="left:53px;top:652.1px;color:#c4c4c4;letter-spacing:0.35px;width:67px;overflow:hidden">Animetion</div>
<svg style="left:35px;top:672.5px" width="14" height="12" viewBox="0 0 14 12"><path d="M0 0 H5.5 L7 2 H14 V12 H0Z" fill="#b8b8b8"/><path d="M0 3 H14" stroke="#282828" stroke-width="0.8"/></svg>
<div class="t" style="left:53px;top:670.0px;color:#c4c4c4;letter-spacing:0.35px;width:67px;overflow:hidden">Font</div>
<svg style="left:22px;top:692.3px" width="7" height="9"><path d="M0 0 V9 L7 4.5Z" fill="#5a5a5a"/></svg>
<svg style="left:35px;top:690.3px" width="14" height="12" viewBox="0 0 14 12"><path d="M0 0 H5.5 L7 2 H14 V12 H0Z" fill="#b8b8b8"/><path d="M0 3 H14" stroke="#282828" stroke-width="0.8"/></svg>
<div class="t" style="left:53px;top:687.8px;color:#c4c4c4;letter-spacing:0.35px;width:67px;overflow:hidden">imagel</div>
<svg style="left:22px;top:710.1px" width="7" height="9"><path d="M0 0 V9 L7 4.5Z" fill="#5a5a5a"/></svg>
<svg style="left:35px;top:708.1px" width="14" height="12" viewBox="0 0 14 12"><path d="M0 0 H5.5 L7 2 H14 V12 H0Z" fill="#b8b8b8"/><path d="M0 3 H14" stroke="#282828" stroke-width="0.8"/></svg>
<div class="t" style="left:53px;top:705.6px;color:#c4c4c4;letter-spacing:0.35px;width:67px;overflow:hidden">Low Poly I</div>
<svg style="left:35px;top:725.9px" width="14" height="12" viewBox="0 0 14 12"><path d="M0 0 H5.5 L7 2 H14 V12 H0Z" fill="#b8b8b8"/><path d="M0 3 H14" stroke="#282828" stroke-width="0.8"/></svg>
<div class="t" style="left:53px;top:723.4px;color:#c4c4c4;letter-spacing:0.35px;width:67px;overflow:hidden">Prefabs</div>
<svg style="left:35px;top:743.8px" width="14" height="12" viewBox="0 0 14 12"><path d="M0 0 H5.5 L7 2 H14 V12 H0Z" fill="#b8b8b8"/><path d="M0 3 H14" stroke="#282828" stroke-width="0.8"/></svg>
<div class="t" style="left:53px;top:741.3px;color:#c4c4c4;letter-spacing:0.35px;width:67px;overflow:hidden">ProjectSet</div>
<svg style="left:35px;top:761.6px" width="14" height="12" viewBox="0 0 14 12"><path d="M0 0 H5.5 L7 2 H14 V12 H0Z" fill="#b8b8b8"/><path d="M0 3 H14" stroke="#282828" stroke-width="0.8"/></svg>
<div class="t" style="left:53px;top:759.1px;color:#c4c4c4;letter-spacing:0.35px;width:67px;overflow:hidden">Scenes</div>
<svg style="left:21px;top:782.9px" width="9" height="7"><path d="M0 0 H9 L4.5 7Z" fill="#5a5a5a"/></svg>
<svg style="left:35px;top:779.4px" width="17" height="13" viewBox="0 0 17 13"><path d="M0 0 H5.5 L7 2 H13 V4 H3 L0 12Z" fill="#c4c4c4"/><path d="M3.5 5 H17 L14 13 H0.5Z" fill="#c4c4c4"/></svg>
<div class="t" style="left:53px;top:776.9px;color:#c4c4c4;letter-spacing:0.35px;width:67px;overflow:hidden">Scripts</div>
<div class="a" style="left:0;top:794.8px;width:119px;height:18px;background:#3a3a3a"></div>
<svg style="left:51px;top:797.3px" width="14" height="12" viewBox="0 0 14 12"><path d="M0 0 H5.5 L7 2 H14 V12 H0Z" fill="#b8b8b8"/><path d="M0 3 H14" stroke="#282828" stroke-width="0.8"/></svg>
<div class="t" style="left:68px;top:794.8px;color:#c4c4c4;letter-spacing:0.35px;width:52px;overflow:hidden">Game</div>
<svg style="left:51px;top:815.1px" width="14" height="12" viewBox="0 0 14 12"><path d="M0 0 H5.5 L7 2 H14 V12 H0Z" fill="#b8b8b8"/><path d="M0 3 H14" stroke="#282828" stroke-width="0.8"/></svg>
<div class="t" style="left:68px;top:812.6px;color:#c4c4c4;letter-spacing:0.35px;width:52px;overflow:hidden">Menu</div>
<svg style="left:51px;top:832.9px" width="14" height="12" viewBox="0 0 14 12"><path d="M0 0 H5.5 L7 2 H14 V12 H0Z" fill="#b8b8b8"/><path d="M0 3 H14" stroke="#282828" stroke-width="0.8"/></svg>
<div class="t" style="left:68px;top:830.4px;color:#c4c4c4;letter-spacing:0.35px;width:52px;overflow:hidden">SaveSy</div>
<svg style="left:51px;top:850.8px" width="14" height="12" viewBox="0 0 14 12"><path d="M0 0 H5.5 L7 2 H14 V12 H0Z" fill="#b8b8b8"/><path d="M0 3 H14" stroke="#282828" stroke-width="0.8"/></svg>
<div class="t" style="left:68px;top:848.3px;color:#c4c4c4;letter-spacing:0.35px;width:52px;overflow:hidden">Splash</div>
<svg style="left:35px;top:868.6px" width="14" height="12" viewBox="0 0 14 12"><path d="M0 0 H5.5 L7 2 H14 V12 H0Z" fill="#b8b8b8"/><path d="M0 3 H14" stroke="#282828" stroke-width="0.8"/></svg>
<div class="t" style="left:53px;top:866.1px;color:#c4c4c4;letter-spacing:0.35px;width:67px;overflow:hidden">Sound</div>
<svg style="left:22px;top:888.4px" width="7" height="9"><path d="M0 0 V9 L7 4.5Z" fill="#5a5a5a"/></svg>
<svg style="left:35px;top:886.4px" width="14" height="12" viewBox="0 0 14 12"><path d="M0 0 H5.5 L7 2 H14 V12 H0Z" fill="#b8b8b8"/><path d="M0 3 H14" stroke="#282828" stroke-width="0.8"/></svg>
<div class="t" style="left:53px;top:883.9px;color:#c4c4c4;letter-spacing:0.35px;width:67px;overflow:hidden">TextMesh</div>
<svg style="left:21px;top:907.8px" width="9" height="7"><path d="M0 0 H9 L4.5 7Z" fill="#5a5a5a"/></svg>
<svg style="left:35px;top:904.2px" width="17" height="13" viewBox="0 0 17 13"><path d="M0 0 H5.5 L7 2 H13 V4 H3 L0 12Z" fill="#c4c4c4"/><path d="M3.5 5 H17 L14 13 H0.5Z" fill="#c4c4c4"/></svg>
<div class="t" style="left:53px;top:901.8px;color:#c4c4c4;letter-spacing:0.35px;width:67px;overflow:hidden">UnityTech</div>
<svg style="left:38px;top:924.1px" width="7" height="9"><path d="M0 0 V9 L7 4.5Z" fill="#5a5a5a"/></svg>
<svg style="left:51px;top:922.1px" width="14" height="12" viewBox="0 0 14 12"><path d="M0 0 H5.5 L7 2 H14 V12 H0Z" fill="#b8b8b8"/><path d="M0 3 H14" stroke="#282828" stroke-width="0.8"/></svg>
<div class="t" style="left:68px;top:919.6px;color:#c4c4c4;letter-spacing:0.35px;width:52px;overflow:hidden">Particle</div>
<div class="a" style="left:121px;top:650px;width:11px;height:264px;background:#282828"></div>
<svg style="left:122px;top:637px" width="9" height="6"><path d="M0 5.5 H9 L4.5 0Z" fill="#c4c4c4"/></svg>
<div class="a" style="left:122px;top:672px;width:9px;height:86px;background:#3c3c3c;border-radius:4px"></div>
<svg style="left:122px;top:925px" width="9" height="6"><path d="M0 0 H9 L4.5 5.5Z" fill="#c4c4c4"/></svg>
<div class="a" style="left:527px;top:585px;width:1px;height:352px;background:#191919"></div><div class="a" style="left:528px;top:585px;width:700px;height:22px;background:#1d1d1d"></div>
<div class="a" style="left:528px;top:585px;width:83px;height:22px;background:#282828"></div>
<svg style="left:536px;top:592px" width="14" height="9" viewBox="0 0 14 9"><path d="M3 0 H11 A3.5 3.5 0 0 1 14 4.5 A4 4 0 0 1 7 7 A4 4 0 0 1 0 4.5 A3.5 3.5 0 0 1 3 0Z" fill="#c4c4c4"/><path d="M2.5 4 H5.5 M4 2.5 V5.5" stroke="#282828" stroke-width="1.1"/><circle cx="10" cy="4" r="1.1" fill="#282828"/></svg>
<div class="t" style="left:555px;top:588.5px;color:#c8c8c8;letter-spacing:0.3px;font-size:13px">Game</div>
<svg style="left:1211px;top:591px" width="4" height="12" viewBox="0 0 4 12"><circle cx="2" cy="1.6" r="1.5" fill="#c4c4c4"/><circle cx="2" cy="5.8" r="1.5" fill="#c4c4c4"/><circle cx="2" cy="10" r="1.5" fill="#c4c4c4"/></svg>
<div class="a" style="left:528px;top:607px;width:700px;height:24px;background:#282828"></div>
<div class="t" style="left:532px;top:611.0px;color:#c4c4c4;letter-spacing:0.3px;font-size:13px">Game</div>
<svg style="left:615px;top:617px" width="9" height="6"><path d="M0 0 H9 L4.5 5.5Z" fill="#c4c4c4"/></svg>
<div class="a" style="left:628px;top:608px;width:1px;height:22px;background:#1c1c1c"></div>
<div class="a" style="left:901px;top:608px;width:1px;height:22px;background:#1c1c1c"></div>
<div class="a" style="left:1160px;top:608px;width:1px;height:22px;background:#1c1c1c"></div>
<div class="a" style="left:1189px;top:608px;width:1px;height:22px;background:#1c1c1c"></div>
<div class="a" style="left:1218px;top:608px;width:1px;height:22px;background:#1c1c1c"></div>
<div class="t" style="left:638px;top:611.0px;color:#c4c4c4;letter-spacing:0.3px;font-size:13px">Display 1</div>
<svg style="left:709px;top:617px" width="9" height="6"><path d="M0 0 H9 L4.5 5.5Z" fill="#c4c4c4"/></svg>
<div class="t" style="left:727px;top:611.0px;color:#c4c4c4;letter-spacing:0.3px;font-size:13px">16:9 Aspect</div>
<svg style="left:886px;top:617px" width="9" height="6"><path d="M0 0 H9 L4.5 5.5Z" fill="#c4c4c4"/></svg>
<div class="t" style="left:909px;top:611.5px;color:#c4c4c4;letter-spacing:0.3px;font-size:13px">Scale</div>
<div class="a" style="left:958px;top:619.5px;width:26px;height:2px;background:#4a4a4a"></div>
<div class="a" style="left:952px;top:615px;width:11px;height:11px;background:#8a8a8a;border-radius:6px"></div>
<div class="t" style="left:992px;top:611.5px;color:#c4c4c4;letter-spacing:0.3px;font-size:13px">1x</div>
<div class="t" style="left:1043px;top:611.0px;color:#6c6c6c;letter-spacing:0.3px;font-size:13px">Play Focused</div>
<svg style="left:1147px;top:617px" width="9" height="6"><path d="M0 0 H9 L4.5 5.5Z" fill="#6a6a6a"/></svg>
<svg style="left:1167px;top:612px" width="15" height="15" viewBox="0 0 15 15"><ellipse cx="7.5" cy="9" rx="5" ry="5.5" fill="#c4c4c4"/><circle cx="7.5" cy="3.5" r="2.5" fill="#c4c4c4"/><path d="M0 6 L3 7.5 M15 6 L12 7.5 M0 10 H3 M15 10 H12 M1 14 L3.5 12 M14 14 L11.5 12" stroke="#c4c4c4" stroke-width="1.2"/><path d="M5.5 9 H9.5 M5.5 11 H9.5" stroke="#282828" stroke-width="1"/></svg>
<svg style="left:1196px;top:613px" width="13" height="12" viewBox="0 0 13 12"><rect x="0" y="4" width="3" height="4" fill="#c4c4c4"/><path d="M3 4 L7 0.5 V11.5 L3 8Z" fill="#c4c4c4"/><path d="M9 3.5 Q10.5 6 9 8.5 M10.5 2 Q13 6 10.5 10" fill="none" stroke="#c4c4c4" stroke-width="1.2"/></svg>
<svg style="left:1222px;top:613px" width="6" height="13" viewBox="0 0 6 13"><rect x="0.6" y="0.6" width="6" height="5" fill="none" stroke="#c4c4c4" stroke-width="1.2"/><rect x="0.6" y="7" width="6" height="5" fill="none" stroke="#c4c4c4" stroke-width="1.2"/></svg>
<div class="a" style="left:528px;top:630px;width:700px;height:1px;background:#1a1a1a"></div>
<div class="a" style="left:528px;top:631px;width:700px;height:306px;background:#1e1e1e"></div>
<svg style="left:605px;top:631px" width="545" height="306" viewBox="605 631 545 306" shape-rendering="crispEdges"><defs><linearGradient id="gs" x1="0" y1="0" x2="0" y2="1"><stop offset="0" stop-color="#d8f0f4"/><stop offset="0.45" stop-color="#c0d4d8"/><stop offset="0.8" stop-color="#8a8e8e"/><stop offset="1" stop-color="#6c6866"/></linearGradient><linearGradient id="gf" x1="0" y1="0" x2="0" y2="1"><stop offset="0" stop-color="#fbfbfb"/><stop offset="1" stop-color="#efefef"/></linearGradient></defs><rect x="605" y="631" width="545" height="306" fill="#6b6765"/><rect x="605" y="631" width="545" height="25" fill="url(#gs)"/><polygon points="605,731 686,701 1062,700 1150,730 1150,937 605,937" fill="url(#gf)"/><rect x="605" y="675.8" width="9.2" height="32.5" fill="#131313"/><rect x="605" y="708.3" width="10.2" height="14.2" fill="#f0b47c"/><rect x="605" y="722.5" width="7.0" height="8.5" fill="#131313"/><rect x="605" y="730.7" width="21.4" height="42.6" fill="#ebe7e3"/><rect x="611" y="745" width="9.3" height="18.0" fill="#a9a9a9"/><rect x="622.4" y="752" width="17.2" height="25.4" fill="#f0b47c"/><rect x="605" y="773.3" width="27.5" height="31.5" fill="#131313"/><rect x="663" y="657.5" width="38.6" height="8.5" fill="#131313"/><rect x="657" y="665.6" width="53.8" height="8.4" fill="#131313"/><rect x="650.8" y="673.8" width="69.2" height="32.7" fill="#131313"/><rect x="720" y="682" width="6.0" height="28.0" fill="#131313"/><rect x="659" y="706" width="61.0" height="8.6" fill="#131313"/><rect x="667" y="714.4" width="46.8" height="6.2" fill="#131313"/><rect x="676" y="720.5" width="36.8" height="7.1" fill="#f2c28e"/><rect x="670" y="727.6" width="15.0" height="7.1" fill="#131313"/><rect x="685" y="727.6" width="21.7" height="7.4" fill="#b6b6b6"/><rect x="706.7" y="727.6" width="15.3" height="7.1" fill="#131313"/><rect x="665" y="734.7" width="50.8" height="34.6" fill="#ebe7e3"/><rect x="715.8" y="727.6" width="14.2" height="41.7" fill="#131313"/><rect x="730" y="751" width="12.0" height="24.4" fill="#f0b47c"/><rect x="661" y="749" width="18.0" height="26.4" fill="#f0b47c"/><rect x="673" y="743" width="8.0" height="12.0" fill="#a9a9a9"/><rect x="679" y="769.3" width="54.0" height="18.3" fill="#131313"/><rect x="679" y="787.6" width="24.6" height="16.2" fill="#131313"/><rect x="710.7" y="787.6" width="22.3" height="16.2" fill="#131313"/><rect x="776.8" y="660.6" width="40.6" height="8.1" fill="#131313"/><rect x="770.7" y="668.7" width="54.9" height="8.1" fill="#131313"/><rect x="764.6" y="676.8" width="69.1" height="9.2" fill="#131313"/><rect x="764.6" y="686" width="63.0" height="6.0" fill="#131313"/><rect x="764.6" y="692" width="12.2" height="28.5" fill="#131313"/><rect x="776.8" y="692" width="52.8" height="36.6" fill="#f0b882"/><rect x="776.8" y="692" width="23.2" height="10.0" fill="#131313"/><rect x="819.5" y="692" width="8.1" height="8.0" fill="#131313"/><rect x="805.2" y="702.2" width="7.2" height="13.2" fill="#101010"/><rect x="829.6" y="714.4" width="6.1" height="7.1" fill="#f2c8a2"/><rect x="776.8" y="717.5" width="15.2" height="11.1" fill="#131313"/><rect x="791" y="722.5" width="26.4" height="13.2" fill="#eeb27c"/><rect x="766.6" y="728.6" width="12.2" height="59.0" fill="#131313"/><rect x="776.8" y="728.6" width="26.2" height="7.1" fill="#131313"/><rect x="777.8" y="735.7" width="45.7" height="39.7" fill="#ebe7e3"/><rect x="795" y="735.7" width="10.0" height="15.3" fill="#131313"/><rect x="811" y="730.7" width="6.4" height="8.1" fill="#131313"/><rect x="815.4" y="735.7" width="8.1" height="35.6" fill="#a3302b"/><rect x="780.9" y="753" width="28.4" height="18.3" fill="#f0b47c"/><rect x="788" y="749" width="7.0" height="8.0" fill="#a9a9a9"/><rect x="778.8" y="771.3" width="46.8" height="28.5" fill="#131313"/><rect x="770.7" y="797.7" width="62.0" height="5.1" fill="#131313"/><rect x="800" y="788" width="7.0" height="9.0" fill="#ebe7e3"/><rect x="852" y="805.6" width="19.0" height="13.8" fill="#131313"/><rect x="854.7" y="817.7" width="14.3" height="10.3" fill="#f0b882"/><rect x="857.5" y="821.5" width="2.0" height="3.5" fill="#131313"/><rect x="864.5" y="821.5" width="2.0" height="3.5" fill="#131313"/><rect x="853" y="826" width="18.0" height="12.0" fill="#ebe7e3"/><rect x="861" y="827" width="2.0" height="9.0" fill="#a3302b"/><rect x="849.5" y="829" width="4.5" height="10.0" fill="#f0b47c"/><rect x="870" y="829" width="4.6" height="10.0" fill="#f0b47c"/><rect x="854" y="836.6" width="15.0" height="14.4" fill="#131313"/><polygon points="907.5,821 945,821.5 945.5,859.5 908,859.5" fill="#4b4b4b"/></svg><div class="a" style="left:0;top:937px;width:1706px;height:23px;background:#141414"></div>
<svg style="left:3px;top:941px" width="16" height="16" viewBox="0 0 16 16"><circle cx="7.5" cy="7.5" r="7" fill="#d0d0d0"/><path d="M11 12 L15 15 L13 10Z" fill="#d0d0d0"/><rect x="6.5" y="3" width="2" height="6.5" rx="1" fill="#141414"/><circle cx="7.5" cy="11.5" r="1.1" fill="#141414"/></svg>
<div class="t" style="left:22px;top:941px;font-size:14px;color:#c4c4c4;letter-spacing:0.12px">[SaveManager] HasAnySave = True, path = D:\Unity\Game\Game v0\game\latest.sav</div>
<svg style="left:1597px;top:943px" width="15" height="15" viewBox="0 0 15 15"><ellipse cx="7.5" cy="9" rx="4.5" ry="5" fill="#c4c4c4"/><circle cx="7.5" cy="3.5" r="2.3" fill="#c4c4c4"/><path d="M0 7 L3 8 M15 7 L12 8 M1 13 L3.5 11.5 M14 13 L11.5 11.5" stroke="#c4c4c4" stroke-width="1.2"/><path d="M1 1 L14 14" stroke="#141414" stroke-width="2.2"/><path d="M1 1 L14 14" stroke="#c4c4c4" stroke-width="1"/></svg>
<svg style="left:1626px;top:943px" width="15" height="15" viewBox="0 0 15 15"><ellipse cx="7" cy="3" rx="6" ry="2.5" fill="#c4c4c4"/><path d="M1 5 Q7 8.5 13 5 V8 Q7 11.5 1 8Z M1 10 Q7 13.5 13 10 V12 Q7 15.5 1 12Z" fill="#c4c4c4"/><path d="M2 1 L15 14" stroke="#141414" stroke-width="2"/></svg>
<svg style="left:1655px;top:942px" width="16" height="16" viewBox="0 0 16 16"><circle cx="8" cy="8" r="6" fill="none" stroke="#c4c4c4" stroke-width="1.5"/><path d="M8 4 V12 M4 8 H12" stroke="#c4c4c4" stroke-width="1.2"/><path d="M1 1 L15 15" stroke="#141414" stroke-width="2.2"/><path d="M1 1 L15 15" stroke="#c4c4c4" stroke-width="1.1"/></svg>
<svg style="left:1683px;top:943px" width="15" height="15" viewBox="0 0 15 15"><circle cx="7.5" cy="7.5" r="6.8" fill="none" stroke="#c4c4c4" stroke-width="1.2"/><path d="M4.5 7.5 L6.8 9.8 L10.5 5.5" fill="none" stroke="#c4c4c4" stroke-width="1.3"/></svg></body></html>
